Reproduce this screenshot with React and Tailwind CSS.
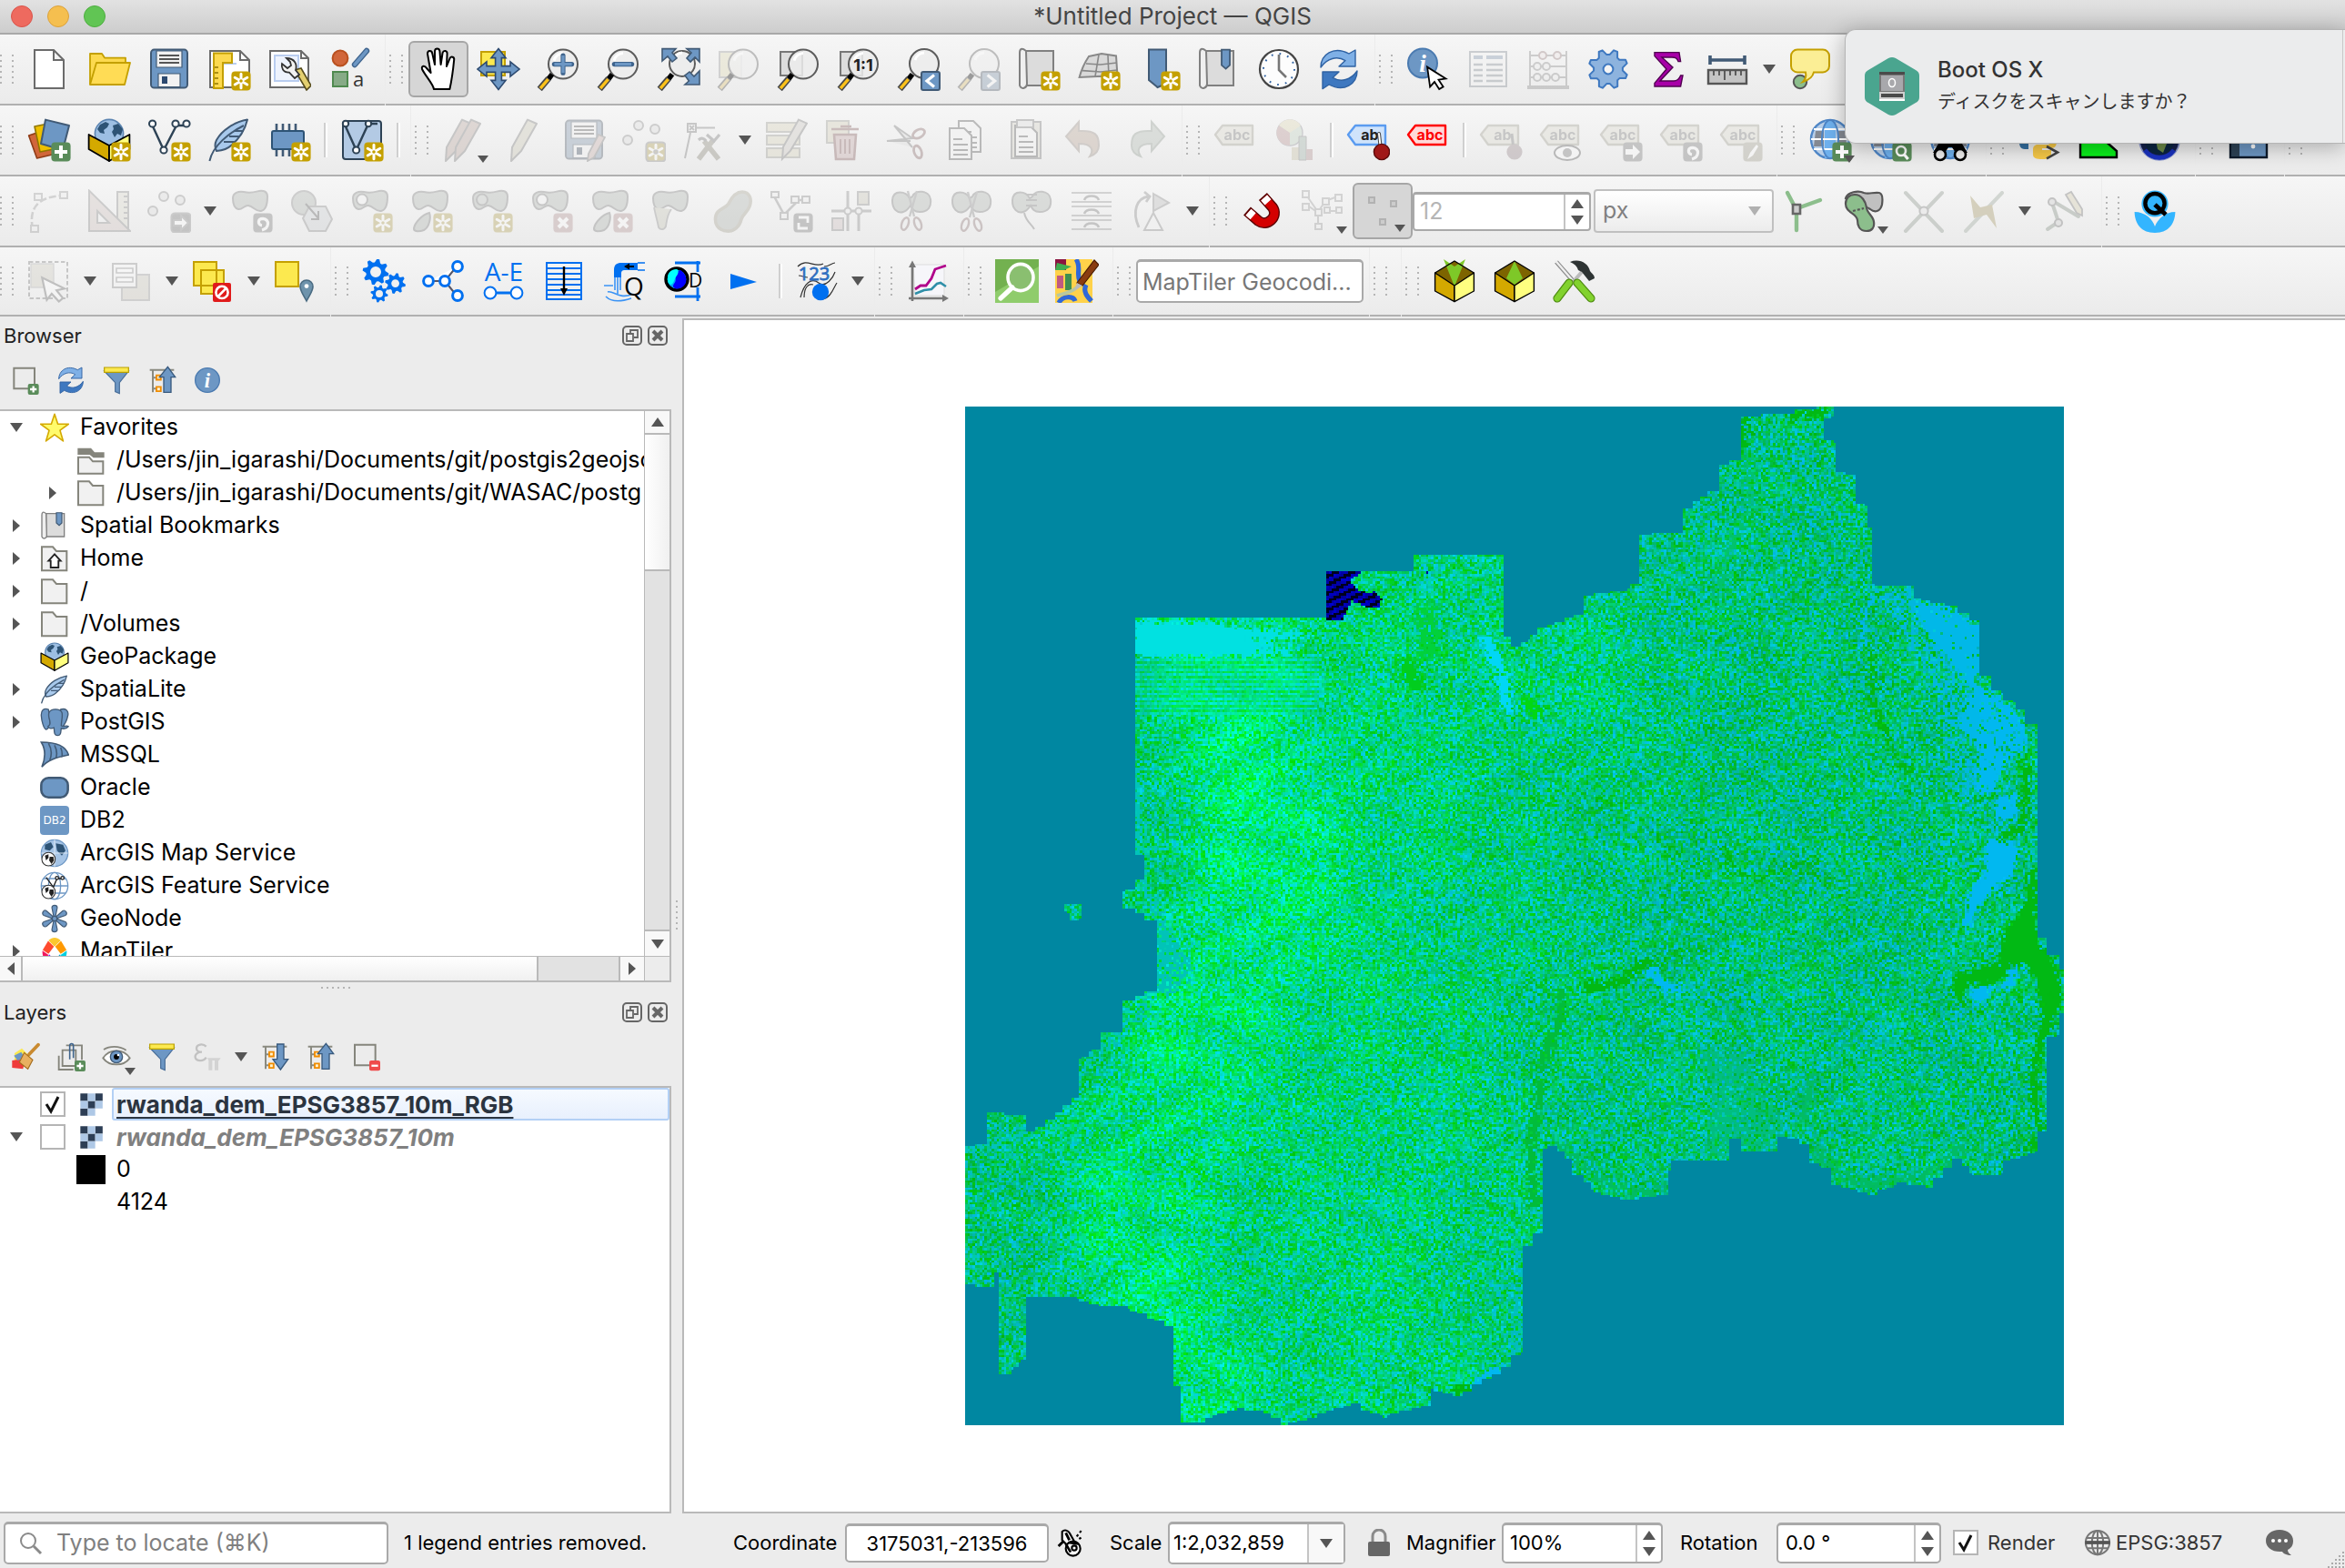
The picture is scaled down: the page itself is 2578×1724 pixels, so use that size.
import { useEffect, useRef, useState } from 'react';

const BLUE = '#6d97c4';
const NAVY = '#415a75';

/* ---------- shared icon parts (24 unit grid) ---------- */

function Svg({ size = 48, children }) {
    return (
        <svg width={size} height={size} viewBox="0 0 24 24" fill="none" className="shrink-0" aria-hidden="true">
            {children}
        </svg>
    );
}

function Badge({ color = '#c4a000', children }) {
    return (
        <g>
            <rect x="13.2" y="13.2" width="10.6" height="10.6" rx="2" fill={color} />
            {children}
        </g>
    );
}

const Star = () => (
    <Badge>
        <path d="M18.5 14.6v7.8M15.1 16.6l6.8 3.9M21.9 16.6l-6.8 3.9" stroke="#fff" strokeWidth="1.5" strokeLinecap="round" />
        <circle cx="18.5" cy="18.5" r="0.9" fill="#c4a000" />
    </Badge>
);
const Plus = () => (
    <Badge color="#5a8c5a"><path d="M18.5 15v7M15 18.5h7" stroke="#fff" strokeWidth="2" /></Badge>
);
const Cross = () => (
    <Badge color="#c98a8a"><path d="M16 16l5 5M21 16l-5 5" stroke="#fff" strokeWidth="2" /></Badge>
);
const ArrowBadge = () => (
    <Badge color="#777"><path d="M14.5 17h4v-2.5l4 4-4 4V20h-4z" fill="#fff" /></Badge>
);
const TurnBadge = () => (
    <Badge color="#777"><path d="M18 22.5c4-1 4.500-6 .5-6.300-3 0-3 3.500-.5 3.800" stroke="#fff" strokeWidth="1.600" /></Badge>
);

function Lens({ x = 14.5, y = 9.3, r = 8, children }) {
    return (
        <g>
            <circle cx={x} cy={y} r={r} fill="#ececec" fillOpacity="0.85" stroke="#5c5c5c" strokeWidth="1" />
            <path d={`M${x - 5} ${y - 2}a5.500 5.500 0 0 1 5-4`} stroke="#fff" strokeWidth="1.500" />
            <path d="M8.500 14.800l-2 2.600" stroke="#000" strokeWidth="2.800" />
            <path d="M6.500 17.200L1.600 23" stroke="#4a4a4a" strokeWidth="3.400" />
            <path d="M6.300 17.600L2 22.600" stroke="#fcc21b" strokeWidth="1.700" />
            {children}
        </g>
    );
}

const Blob = ({ hole }) => (
    <g stroke="#777" strokeWidth="1">
        <path d="M2 5c0-3 3-4 6-3.500 3 .6 4 .6 7-.2 4-1 6 0 6 2.700 0 4-1 7.500-3.500 8-3 .5-4-2.500-7-3-2-.3-3.500 2.500-5.500 2C3 10.500 2 8 2 5z" fill={hole === 'ring' ? '#aaa' : '#a9b5a9'} />
        {hole && <circle cx="7" cy="5.800" r="3" fill={hole === 'full' ? '#b8c2b8' : '#f2f2f2'} />}
    </g>
);
const Leaf = () => <path d="M11 13c-4 1-8 5.500-8.500 8.500-.2 2 3 2 5.500 1 3-1.500 4-7 3-9.500z" fill="#a9b5a9" stroke="#777" />;

const Tag = ({ fill = '#dcd9c0', stroke = '#a09c80', color = '#777', text = 'abc' }) => (
    <g>
        <path d="M1 9l4-5h16.500v10.500H5z" fill={fill} stroke={stroke} strokeWidth="1.200" strokeLinejoin="round" />
        <text x="13" y="11.800" fontSize="8" fontWeight="700" textAnchor="middle" fill={color} fontFamily="Inter, sans-serif">{text}</text>
    </g>
);

const Cube = ({ children }) => (
    <g strokeLinejoin="round">
        <path d="M1.300 7.500L12 1l10.700 6.500L12 15z" fill="#7d6400" />
        {children}
        <path d="M1.300 7.500L12 14.500v8.800L1.300 17.500z" fill="#d4a900" stroke="#000" strokeWidth="0.700" />
        <path d="M22.700 7.500L12 14.500v8.800l10.700-5.800z" fill="#ffff80" stroke="#000" strokeWidth="0.700" />
        <path d="M1.300 7.500L12 1l10.700 6.500" stroke="#000" strokeWidth="0.700" />
    </g>
);

const Continents = () => (
    <path d="M7 3.500l3-1.500 2 1-1 2-2 1.500.5 2L7 8 5.500 6zM14 4l3-1 2.500 3-1 3.500-2-1-1.500 2-1.500-3 1-1.500z" fill="#2d5375" />
);

const Box = () => (
    <g strokeLinejoin="round">
        <circle cx="12" cy="8.500" r="7.800" fill="#9dbfe3" stroke="#5b84b1" strokeWidth="0.800" />
        <Continents />
        <path d="M.8 9L12 15v8.500L.8 17z" fill="#d4a900" stroke="#000" strokeWidth="0.900" />
        <path d="M23.200 9L12 15v8.500L23.200 17z" fill="#ffff80" stroke="#000" strokeWidth="0.900" />
    </g>
);

const Feather = () => (
    <g>
        <path d="M22 .8C15 2 8 6.500 5 12c-1 2-1 4 0 6 3-.3 6-1 8-3 5-4 7.500-8 9-14.200z" fill="#a8c9ec" stroke={NAVY} strokeWidth="1" strokeLinejoin="round" />
        <path d="M20 4C12 8 3 15 1.200 23.500M9 13h6M12 10h6M15 7h5" stroke={NAVY} strokeWidth="1" />
    </g>
);

const Refresh = () => (
    <g stroke="#2f62a3" strokeWidth="0.700" strokeLinejoin="round">
        <path d="M2 11C2 4 9-1 17.500 3.500L21 1.500v9h-9l3.500-3.200C11 4.500 5.500 6 2 11z" fill="#7fb0e6" />
        <path d="M22 13c0 7-7 12-15.500 7.500L3 22.800v-9.300h9l-3.500 3.200c4.500 2.800 10 1.300 13.500-3.700z" fill="#3e78c0" />
    </g>
);

const Info = ({ x = 12, y = 12, r = 10 }) => (
    <g>
        <circle cx={x} cy={y} r={r} fill={BLUE} stroke="#4a7ab0" strokeWidth="1" />
        <text x={x} y={y + r * 0.6} textAnchor="middle" fontSize={r * 1.7} fontStyle="italic" fontWeight="700" fill="#fff" fontFamily="Liberation Serif, serif">i</text>
    </g>
);

const Scroll = () => (
    <g stroke="#808080" strokeWidth="1">
        <path d="M5 2h15v19H5z" fill="#dcdcdc" />
        <path d="M5 2C2.500 0 1.500 1 1.500 3v18c1 2.500 4 1.500 4-1z" fill="#efefef" />
    </g>
);

const Globe = () => (
    <g>
        <circle cx="12" cy="11.500" r="10.500" fill="#b9cfe8" stroke="#4f86c6" strokeWidth="1.200" />
        <path d="M9 1.500h6V22H9z" fill="#6fb1ee" />
        <path d="M4 7h4.500v8.500H3zM16 7h4.500l.5 8.500h-5z" fill="#77777c" fillOpacity="0.8" />
        <path d="M1.500 11.500h21M3 6h18M3 17h18" stroke="#fff" strokeWidth="1" />
        <ellipse cx="12" cy="11.500" rx="4.500" ry="10.500" stroke="#4f86c6" strokeWidth="1" />
    </g>
);

const gearPath = (cx, cy, r, teeth) => {
    let d = '';
    const n = teeth * 4;
    for (let i = 0; i < n; i++) {
        const rr = i % 4 < 2 ? r : r * 0.74;
        const a = ((i + 0.5) / n) * Math.PI * 2;
        d += `${i ? 'L' : 'M'}${(cx + rr * Math.cos(a)).toFixed(2)} ${(cy + rr * Math.sin(a)).toFixed(2)}`;
    }
    return d + 'z';
};

const Filter = () => (
    <g>
        <path d="M2 4.500h20l-7.500 9.500v9l-3.500-1.500V14z" fill={BLUE} stroke="#4a6f99" strokeWidth="0.900" />
        <path d="M2 1.500h20v4H2z" fill="#fce94f" stroke="#b9a000" strokeWidth="0.900" />
    </g>
);

const TreeArrow = ({ down }) => (
    <g>
        <path d="M2 3.500h20M4.500 4v18M4.500 10h4M4.500 19h4" stroke="#8a8a80" strokeWidth="1.500" />
        <path d="M7.500 8h3.600v3.600H7.500zM7.500 17.500h3.600v3.600H7.500z" fill="#fff3d0" stroke="#f08c00" strokeWidth="1.400" />
        {down
            ? <path d="M14 1.500h5.500V14H23l-6.200 8.500L10.500 14H14z" fill={BLUE} stroke="#38597d" strokeWidth="1" />
            : <path d="M13.500 22V9.500H10L16.800 1l6.200 8.500h-3.500V22z" fill={BLUE} stroke="#38597d" strokeWidth="1" />}
    </g>
);

const Scissors = ({ y = 0 }) => (
    <g transform={`translate(0 ${y})`} stroke="#888" strokeWidth="1.200">
        <path d="M10 1l3.500 14M15 1l-4 14" />
        <ellipse cx="8.500" cy="19" rx="1.800" ry="3.500" transform="rotate(20 8.500 19)" stroke="#a07070" />
        <ellipse cx="15.500" cy="19" rx="1.800" ry="3.500" transform="rotate(-20 15.500 19)" stroke="#a07070" />
    </g>
);

const Lobes = () => (
    <path d="M11 5C9 1 2 0 1.500 6c-.2 5 3 7.500 6 6.500 2-.5 3-2 4-3.500 1 2 2 3.500 5 3.500 5 0 6.500-3 6-7C22 .5 14 0 12.500 4z" fill="#a9b5a9" stroke="#777" />
);

const PagePart = ({ x, y }) => (
    <g>
        <path d={`M${x} ${y}h8l4 4v13H${x}z`} fill="#f4f4f4" stroke="#555" strokeWidth="1" />
        <path d={`M${x + 2} ${y + 6}h5M${x + 2} ${y + 9}h8M${x + 2} ${y + 12}h8M${x + 2} ${y + 14.500}h8`} stroke="#555" strokeWidth="0.900" />
    </g>
);

const Pencil = ({ dx = 0, fill = '#cfc7a0' }) => (
    <path transform={`translate(${dx} 0)`} d="M14 .8l5 2.200-8.500 15L5 23.500l.5-7.500z" fill={fill} stroke="#777" strokeWidth="1" strokeLinejoin="round" />
);

const Floppy = () => (
    <g>
        <rect x="2" y="1.300" width="20" height="21" rx="1.800" fill={BLUE} stroke={NAVY} strokeWidth="1" />
        <path d="M5 2h14v9H5z" fill="#f2f2f2" stroke={NAVY} strokeWidth="0.600" />
        <path d="M6.500 4.500h11M6.500 6.500h11M6.500 8.500h11" stroke="#555" strokeWidth="0.900" />
        <path d="M6 14.500h12v7.300H6z" fill="#f2f2f2" stroke={NAVY} strokeWidth="0.600" />
        <path d="M8 16h3v4H8z" fill="#2d4a70" />
    </g>
);

const Folder = () => (
    <path d="M1.500 22V2.500h9l3 3.500h8.500v16z" fill="#f1f1f1" stroke="#85857c" strokeWidth="1.500" />
);

/* ---------- icons ---------- */

const ICONS = {
    newProject: <path d="M4 1.500h10.500L20 7v15.500H4zM14.500 1.500V7H20" fill="#fff" stroke="#6b6b6b" strokeWidth="1" />,
    open: (
        <g stroke="#c4a000" strokeWidth="0.900" strokeLinejoin="round">
            <path d="M1.500 20V3.500H8l1.500 2.300H21V12z" fill="#fcd94f" />
            <path d="M5 8.500h18.500L20.500 20.500H1.500z" fill="#ffdc55" />
        </g>
    ),
    save: <Floppy />,
    layout: (
        <g>
            <path d="M1.500 2h16.500l5 5v15H1.500z" fill="#fff" stroke="#6b6b6b" />
            <path d="M18 2v5h5" stroke="#6b6b6b" />
            <path d="M6 20V9h10" stroke="#b9cdf0" />
            <path d="M3.500 3.300h10v5.200h-5V22.500h-5z" fill="#fcd94f" stroke="#c4a000" />
            <path d="M4 11h2M4 14h2M4 17h2M4 20h2" stroke="#8f7500" strokeWidth="0.700" />
            <Star />
        </g>
    ),
    layoutManager: (
        <g>
            <path d="M1.500 2h17l4 4v16h-21z" fill="#fff" stroke="#6b6b6b" />
            <path d="M18.500 2v4h4" stroke="#6b6b6b" />
            <path d="M4 4.500h13v14H4z" fill="#eef3fd" stroke="#b9cdf0" />
            <path d="M15 12.500l3.500-1L24 21l-2.500 2.500z" fill="#e3cf70" stroke="#554b1c" strokeWidth="0.800" />
            <path d="M10.500 6c4.500 0 6 3.500 5 6.500l2 2.500-2.500 2-3-3.200C8.500 14 7.500 11 8 9l3 2.500 2-1.500-.5-2z" fill="#f2f2f2" stroke="#333" strokeWidth="0.900" />
        </g>
    ),
    style: (
        <g>
            <circle cx="7" cy="6" r="4.200" fill="#d1663a" stroke="#b9501f" />
            <path d="M15 9.500l6.500-7.500" stroke="#3e638c" strokeWidth="3.200" strokeLinecap="round" />
            <path d="M15 9.500l6.500-7.500" stroke={BLUE} strokeWidth="1.800" strokeLinecap="round" />
            <rect x="3" y="13.500" width="8" height="8" fill="#87ab87" stroke="#4f8a4f" />
            <text x="14" y="21.500" fontSize="11" fill="#333" fontFamily="Open Sans, sans-serif">a</text>
        </g>
    ),
    pan: (
        <path d="M8.500 22.500c-.5-3-4.500-7-6.500-11-.5-2 1.500-2.200 2.500-.5l2.300 2.500L5 3c0-1.800 2.200-2 2.600-.3L9 9V1.500c.2-1.700 2.400-1.700 2.700 0l.6 7.500 1-6.500c.5-1.500 2.500-1.200 2.500.4L15.500 10l1.800-4.500c.8-1.300 2.500-.6 2.300.8-.5 5.200-1.400 11.700-2.400 16.200z" fill="#fff" stroke="#000" strokeWidth="1" strokeLinejoin="round" transform="translate(1 .5)" />
    ),
    panSelection: (
        <g>
            <path d="M2.500 2.500h13v13h-13z" fill="#fce94f" stroke="#c4a000" />
            <path d="M12 .8l4 5h-2.300v4.500h4.800V8l5 4-5 4v-2.300h-4.800v4.500H16l-4 5-4-5h2.300v-4.500H5.500V16l-5-4 5-4v2.300h4.800V5.800H8z" fill={BLUE} stroke="#2d4a70" strokeWidth="0.800" />
        </g>
    ),
    zoomIn: <Lens><path d="M14.500 4.500v9.600M9.700 9.300h9.600" stroke="#3e638c" strokeWidth="2.600" strokeLinecap="round" /><path d="M14.500 4.500v9.600M9.700 9.300h9.600" stroke={BLUE} strokeWidth="1.600" /></Lens>,
    zoomOut: <Lens><path d="M9.700 9.300h9.600" stroke="#3e638c" strokeWidth="2.600" strokeLinecap="round" /><path d="M10 9.300h9" stroke={BLUE} strokeWidth="1.600" /></Lens>,
    zoomFull: (
        <g>
            <Lens x={14} y={9} r={7} />
            <path d="M3 .8h7.500L8.500 3l2.500 3-2.500 2-2.500-3L3 7.500zM23.500.8V8L21 5.500 18.500 8l-2-2L19 3 16.500.8zM23.500 20.500h-8l2.200-2-2.200-3 2.500-2 2.500 2.500 3-3z" fill={BLUE} stroke={NAVY} strokeWidth="0.800" />
        </g>
    ),
    zoomSelection: <g><path d="M1.500 2.500h12v14h-12z" fill="#e6dc90" stroke="#999" /><Lens /></g>,
    zoomLayer: <g><path d="M2 2.500h12v13H2z" fill="#ddd" stroke="#777" /><Lens /></g>,
    zoomNative: <g><path d="M2 2.500h12v13H2z" fill="#ddd" stroke="#777" /><Lens><text x="14.500" y="12.800" fontSize="9" fontWeight="700" textAnchor="middle" fill="#222" fontFamily="Inter, sans-serif">1:1</text></Lens></g>,
    zoomLast: <g><Lens x={15} y={9} /><rect x="13.500" y="13.500" width="10" height="10" rx="1" fill={BLUE} stroke={NAVY} /><path d="M20.500 15.300l-4 3.200 4 3.200" stroke="#fff" strokeWidth="1.600" /></g>,
    zoomNext: <g><Lens x={15} y={9} /><rect x="13.500" y="13.500" width="10" height="10" rx="1" fill={BLUE} stroke={NAVY} /><path d="M16.800 15.300l4 3.200-4 3.200" stroke="#fff" strokeWidth="1.600" /></g>,
    newMap: <g><Scroll /><Star /></g>,
    new3d: (
        <g>
            <path d="M6.500 5l7-1.500 8 1.200.8 12-8.500-.8-12.500.6C2.500 12 4.500 8 6.500 5z" fill="#d9d9d9" stroke="#888" />
            <path d="M5 9l8 .5 9-1M3 12.800l10 .7 9-1M12 4l-2 12M17 4.500l.5 12" stroke="#888" strokeWidth="0.800" />
            <Star />
        </g>
    ),
    newBookmark: <g><path d="M6.500 1.300H16V20l-4.700 2-4.800-4z" fill={BLUE} stroke={NAVY} /><Star /></g>,
    bookmarks: <g><Scroll /><path d="M13.500 1.300h4.500v8.500l-2.200 2-2.300-2z" fill={BLUE} stroke={NAVY} strokeWidth="0.900" /></g>,
    clock: (
        <g>
            <circle cx="12" cy="12" r="10.500" fill="#fdfdfd" stroke="#444" strokeWidth="1.100" />
            <circle cx="12" cy="12" r="8.500" stroke="#3465a4" strokeWidth="1" strokeDasharray="0.900 3.550" />
            <path d="M12 4v8.500l4 4" stroke="#777" strokeWidth="1.300" />
        </g>
    ),
    refresh: <Refresh />,
    identify: (
        <g>
            <Info x={9} y={8.700} r={8} />
            <path d="M12 10.500v11l2.800-2.300 2 4.300 2.400-1-2-4.200h4z" transform="rotate(-8 14 14)" fill="#fff" stroke="#000" strokeWidth="0.900" />
        </g>
    ),
    table: (
        <g>
            <path d="M2 2.500h20v19H2z" fill="#f4f4f4" stroke="#7a8a9a" />
            <path d="M4 5.500h5M11 5.500h9" stroke="#6d97c4" strokeWidth="2" />
            <path d="M4 9.500h5M11 9.500h9M4 12.500h5M11 12.500h9M4 15.500h5M11 15.500h9M4 18.500h5M11 18.500h9" stroke="#7a8a9a" strokeWidth="1.200" />
        </g>
    ),
    abacus: (
        <g stroke="#888">
            <path d="M2 2v20M22 2v20M2 4.500h20M2 10.500h20M2 16.500h20" />
            <path d="M.5 22h23" strokeWidth="2" />
            <g fill="#f4e4e4" stroke="#a77">
                <circle cx="9" cy="4.500" r="2" /><circle cx="17" cy="4.500" r="2" />
            </g>
            <g fill="#eee">
                <circle cx="6" cy="10.500" r="2" /><circle cx="11" cy="10.500" r="2" />
                <circle cx="6" cy="16.500" r="2" /><circle cx="11" cy="16.500" r="2" /><circle cx="16" cy="16.500" r="2" />
            </g>
        </g>
    ),
    gear: (
        <g>
            <path d={gearPath(12, 12, 10.800, 8)} fill="#8db3de" stroke="#3e78c0" strokeWidth="1" strokeLinejoin="round" transform="rotate(11 12 12)" />
            <circle cx="12" cy="12" r="2.700" fill="#f4f4f4" stroke="#3e78c0" />
        </g>
    ),
    sigma: <path d="M4.500 2.800H18l.8 5h-1.300c-.7-2-1.500-2.300-3.500-2.300H8.500L14.500 11l-7 7.500h7.500c2 0 3-1 3.800-3H20l-1.200 6H4.500v-1.800L11 12 4.500 4.800z" fill="#a800a8" stroke="#500050" strokeWidth="0.700" />,
    measure: (
        <g>
            <path d="M2 7h19M2 4.500v5M21 4.500v5" stroke={NAVY} strokeWidth="1.800" />
            <rect x="1" y="12.500" width="21" height="7.500" fill="#c4c4c4" stroke="#555" strokeWidth="1.200" />
            <path d="M4 13v2.500M7 13v2.500M10 13v5M13 13v2.500M16 13v2.500M19 13v2.500" stroke="#444" strokeWidth="0.800" />
        </g>
    ),
    mapTip: (
        <g>
            <circle cx="6.500" cy="19" r="3.600" fill="#8cbe8c" stroke="#555" />
            <path d="M5 1.300h14a3.500 3.500 0 0 1 3.500 3.500v5.400a3.500 3.500 0 0 1-3.500 3.500h-5c-.5 2.300-2.500 4.300-6 5.300 1.500-1.500 2-3 1.500-5.300H5a3.500 3.500 0 0 1-3.500-3.500V4.800A3.500 3.500 0 0 1 5 1.300z" fill="#fbee95" stroke="#c4a000" />
        </g>
    ),
    dataSource: (
        <g strokeLinejoin="round">
            <path d="M.8 9.500l9-3 6 13-10.500 2.500z" fill="#d1663a" stroke="#8f3c17" strokeWidth="0.800" />
            <path d="M4 4.500l10-2 3 14-10 2z" fill="#eec000" stroke="#8f7500" strokeWidth="0.800" />
            <path d="M10 .8l13 3.200-3.500 13.500L7.500 14z" fill={BLUE} stroke={NAVY} strokeWidth="1" />
            <Plus />
        </g>
    ),
    newGpkg: <g><Box /><Star /></g>,
    newShp: (
        <g>
            <path d="M3 4.500l6 13 7-13.500h4" stroke="#2d4255" strokeWidth="1.200" />
            <g fill="#fff" stroke="#2d4255"><circle cx="2.800" cy="3" r="1.800" /><circle cx="9" cy="17.500" r="1.800" /><circle cx="15.500" cy="3" r="1.800" /><circle cx="21.500" cy="3" r="1.800" /></g>
            <Star />
        </g>
    ),
    newSpatialite: <g><Feather /><Star /></g>,
    newMemory: (
        <g>
            <path d="M5 3v18M8.500 3v18M12 3v18M15.500 3v18" stroke={NAVY} strokeWidth="1.300" />
            <rect x="2.500" y="7" width="17.500" height="10" rx="1" fill={BLUE} stroke="#2d5375" />
            <Star />
        </g>
    ),
    newVirtual: (
        <g>
            <rect x="1.500" y="1.500" width="21" height="21" rx="1.500" fill="#b3cae4" stroke="#2d4255" />
            <path d="M2.500 3.500l6.300 14L15.500 3h5" stroke="#2d4255" strokeWidth="1.200" />
            <g fill="#fff" stroke="#2d4255"><circle cx="3" cy="3" r="1.600" /><circle cx="8.800" cy="17.500" r="1.800" /><circle cx="15.500" cy="3" r="1.600" /></g>
            <Star />
        </g>
    ),
    currentEdits: <g><Pencil dx={-3} fill="#c9a090" /><Pencil dx={2} fill="#c9a090" /></g>,
    edit: <Pencil />,
    saveEdits: <g><Floppy /><path d="M20 9l3.500 1.500-6 11L14 23.500l.5-4z" fill="#d9a9a0" stroke="#777" strokeWidth="0.900" /></g>,
    addPoint: <g fill="#ddd" stroke="#888"><circle cx="9" cy="4" r="2.500" /><circle cx="18" cy="6" r="2.500" /><circle cx="3" cy="12" r="2.500" /><Star /></g>,
    vertexTool: (
        <g stroke="#777">
            <path d="M3 3h4.500v4.500H3zM4 4l2.500 2.500M6.500 4L4 6.500M8 5.200h10M4.500 8L1.500 22" />
            <path d="M9 22.500L17 12M20 22.500l-8-10" strokeWidth="2.800" stroke="#8a8468" />
            <path d="M9 12c1.500-1.500 3-1 4 .5M13.500 9l4 3.500 3-3.500" strokeWidth="1.600" />
        </g>
    ),
    modifyAttr: (
        <g>
            <path d="M1.500 2.500h18v5h-18zM1.500 9.500h18v5h-18zM1.500 16.500h18v5h-18z" fill="#ddd3a0" stroke="#998" />
            <path d="M19 .8l4.500 2-9 15-4.500 4.500.5-6.500z" fill="#cfc7b8" stroke="#777" />
        </g>
    ),
    trash: (
        <g>
            <path d="M1.500 1.500h12v12h-12z" fill="#d9cfa0" stroke="#998" />
            <path d="M4 6h15M9 4.500h6M5.500 9h12l-1 13.500h-10z" fill="#d8a0a0" stroke="#a05050" strokeWidth="1.300" />
            <path d="M9 11.500v8M11.500 11.500v8M14 11.500v8" stroke="#a05050" />
        </g>
    ),
    cut: (
        <g stroke="#777">
            <path d="M1.500 12.500l14-1.500-10-7 10 12M1.500 12.500h13" fill="#ddd" />
            <ellipse cx="19" cy="8.500" rx="3.500" ry="2.200" transform="rotate(-30 19 8.500)" stroke="#a06060" strokeWidth="1.400" />
            <ellipse cx="18.500" cy="18.500" rx="2" ry="3.500" transform="rotate(-20 18.500 18.500)" stroke="#a06060" strokeWidth="1.400" />
        </g>
    ),
    copy: <g><PagePart x={8} y={1.500} /><PagePart x={3} y={5.500} /></g>,
    paste: <g><rect x="4" y="2" width="16" height="20" fill="#d6cfb8" stroke="#777" /><PagePart x={6} y={4} /><path d="M7 1h9v4H7z" fill="#ddd" stroke="#777" /></g>,
    undo: <path d="M1 10l7-8v5c9-.5 11 2 11 8 0 3-2 5-5 6 2-3 2-7-6-7v4z" fill="#c9a080" stroke="#a08a7a" />,
    redo: <path d="M22 10l-7-8v5C6 6.500 4 9 4 15c0 3 2 5 5 6-2-3-2-7 6-7v4z" fill="#a9bca9" stroke="#8a9c8a" />,
    label: <Tag />,
    diagram: (
        <g>
            <circle cx="9" cy="8" r="7" fill="#b3d6b3" stroke="#889" strokeWidth="0.700" />
            <path d="M9 8L3 4a7 7 0 0 1 12 0z" fill="#e6d890" />
            <path d="M9 8L3 4a7 7 0 0 0 6 11z" fill="#d68a8a" />
            <path d="M10 16h4v7h-4z" fill="#cfc28a" /><path d="M14 10h4v13h-4z" fill="#8fb5a0" stroke="#777" strokeWidth="0.500" /><path d="M18 17h3.500v6H18z" fill="#c98a8a" />
        </g>
    ),
    pinLabel: (
        <g>
            <Tag fill="#cfe3fb" stroke="#5a9bf0" color="#222" text="ab" />
            <path d="M18 8.500l.8 7" stroke="#444" strokeWidth="2" strokeLinecap="round" />
            <path d="M18 8.500l.8 7" stroke="#fff" strokeWidth="1" strokeLinecap="round" />
            <circle cx="19.500" cy="18.500" r="4.300" fill="#a01818" stroke="#5c0a0a" strokeWidth="0.700" />
        </g>
    ),
    unplaced: <Tag fill="#ffd9d9" stroke="#f00" color="#f00" />,
    pinGrey: <g><Tag text="ab" /><path d="M18 8.500l.8 7" stroke="#777" strokeWidth="1.500" /><circle cx="19.500" cy="18.500" r="4.300" fill="#a08088" /></g>,
    showLabel: <g><Tag /><ellipse cx="15.500" cy="19" rx="7" ry="4" fill="#fff" stroke="#555" /><circle cx="15.500" cy="19" r="2.500" fill="#777" /></g>,
    moveLabel: <g><Tag /><ArrowBadge /></g>,
    rotateLabel: <g><Tag /><TurnBadge /></g>,
    editLabel: <g><Tag /><Badge color="#a39c7c"><path d="M20.500 14.500L17 19l-1.500 3.500 3-2 3-5z" fill="#fff" /></Badge></g>,
    addGlobe: <g><Globe /><Plus /></g>,
    searchGlobe: <g><Globe /><Badge color="#5a8c5a"><circle cx="18" cy="18" r="2.500" stroke="#fff" strokeWidth="1.300" /><path d="M19.800 20l2 2.500" stroke="#fff" strokeWidth="1.600" /></Badge></g>,
    binoculars: (
        <g>
            <Globe />
            <path d="M8.500 9h7l6 10h-6.500l-2-3h-2l-2 3H2.500z" fill="#000" />
            <circle cx="6.500" cy="20" r="3" fill="#eee" stroke="#000" strokeWidth="1.300" /><circle cx="17.500" cy="20" r="3" fill="#eee" stroke="#000" strokeWidth="1.300" />
        </g>
    ),
    python: (
        <g>
            <path d="M10.500 1c-5 0-5 2-5 4v2.500h5.500v1H4C1.500 8.500 1 11 1 13s.5 4 3 4h2v-3c0-2 1.500-3 3.500-3h5c1.500 0 2.500-1 2.500-2.500V5c0-3-3-4-6.500-4z" fill="#3571a3" />
            <path d="M19 8v3.500c0 2-1.500 3-3 3h-5c-1.500 0-2.500 1.200-2.500 2.700V20c0 2 2 2.500 5 2.500 3.500 0 5-1 5-3v-2h-5v-1h5c2.500 0 3-2 3-4s-.5-4-2.500-4.500z" fill="#f7c948" />
            <path d="M16 15.500l6 3.300-6 3.400" stroke="#444" strokeWidth="1.300" />
        </g>
    ),
    contour: <path d="M1.500 3h6l3 4 4 5 3 2.500 4 3.500v3.500h-20z" fill="#0bf01b" stroke="#000" strokeWidth="1.200" />,
    earth: (
        <g>
            <circle cx="12" cy="12" r="11" fill="#14204a" stroke="#8e9ad0" strokeWidth="0.800" />
            <circle cx="12" cy="12" r="8" fill="#0b2540" />
            <path d="M10 12l4-2 2 4-2 5-3-2zM6 10l3-2 1 4-2 2z" fill="#6c8a48" />
            <path d="M4 17.500c4 5.500 12 5.500 16 0" stroke="#1a32c0" strokeWidth="2.400" />
        </g>
    ),
    book: (
        <g>
            <path d="M2 2h20v19.500H2z" fill={BLUE} stroke="#0d1a2a" strokeWidth="1.200" />
            <path d="M2.500 2.500h4.500v18.500H2.500z" fill="#2d4255" />
            <circle cx="14.500" cy="15.500" r="1.200" fill="#fff" />
        </g>
    ),
    digitCurve: <g stroke="#999"><path d="M3 22C1 12 4 4 20 3.500" strokeWidth="1.300" strokeDasharray="4 1.500" /><path d="M2 20h4v3.500H2zM4 2.500h4v3.500H4zM18 1.500h4V5h-4z" fill="#eee" /></g>,
    triangle: (
        <g stroke="#888">
            <path d="M16.500 1.500h6v21h-6z" fill="#ddd8c0" /><path d="M20 4h2M20 7h2M20 10h2M20 13h2M20 16h2" />
            <path d="M1 .8V23h22.500zM5.500 12v6.500H12z" fillRule="evenodd" fill="#d9c0b8" />
        </g>
    ),
    movePoint: <g fill="#ddd" stroke="#888"><circle cx="9" cy="4" r="2.500" /><circle cx="18" cy="6" r="2.500" /><circle cx="3" cy="12" r="2.500" /><ArrowBadge /></g>,
    rotateFeature: <g><Blob /><TurnBadge /></g>,
    simplify: <g stroke="#888"><ellipse cx="8" cy="7.500" rx="6.500" ry="6.500" fill="#a9b5a9" /><path d="M11 9.500h9l3.500 7-3.500 6.500h-9L7.500 16z" fill="#c9ced4" /><path d="M9 8l7 8M16 12v4.500h-4" stroke="#555" /></g>,
    addRing: <g><Blob hole="empty" /><Star /></g>,
    addPart: <g><Blob /><Leaf /><Star /></g>,
    fillRing: <g><Blob hole="full" /><Star /></g>,
    deleteRing: <g><Blob hole="empty" /><Cross /></g>,
    deletePart: <g><Blob /><Leaf /><Cross /></g>,
    reshape: (
        <g>
            <Blob />
            <path d="M2.500 10c1 5 2 8 2.500 11 1 1.500 3 1.500 4-.5.500-3 .5-6 3-9.500" fill="#c5c5a8" stroke="#888" strokeWidth="0.900" />
        </g>
    ),
    offset: <path d="M18 1.500c4 0 5.500 4 4 8-1 3-3.500 4-4.500 7-1 4-4 7-8 6.500-5-.5-7-4-6-8.500 1-4 5-3.500 7-6.500 1-2 3-6.500 7.500-6.500z" fill="#a9b5a9" stroke="#a89f80" strokeWidth="1.800" />,
    reverse: <g><path d="M2 3l6 11 8-8h4" stroke="#888" strokeWidth="1.300" /><path d="M1 1.500h4v3H1zM12 4h4v3.500h-4zM18 4h4v3.500h-4zM6 13h4v3.500H6z" fill="#eee" stroke="#888" /><Badge color="#777"><path d="M16 15.500h5v3M21 21.500h-5v-3" stroke="#fff" strokeWidth="1.400" /></Badge></g>,
    trimExtend: <g stroke="#888"><path d="M10 1v22M1 12h22M16 12v11" strokeWidth="1.500" /><path d="M15.500 1.500h6v7h-6z" fill="#c9c3a8" /><path d="M1.500 16h6v6.500h-6z" fill="#d8bcbc" /><circle cx="10" cy="12" r="1.800" fill="#eee" /><circle cx="16" cy="12" r="1.800" fill="#eee" /></g>,
    splitFeatures: <g><Lobes /><Scissors /></g>,
    splitParts: <g><Lobes /><Scissors y={0.500} /></g>,
    mergeFeatures: <g stroke="#777"><Lobes /><path d="M9 3h6M9 6h6M9 9h6M8 13c1 5 4 6 5.500 9" /></g>,
    mergeAttr: <g stroke="#777"><path d="M1 2h22M1 7h22M1 9.500h22M1 14.500h22M1 17h22M1 22h22" strokeWidth="0.800" /><path d="M8 6c1-3 7-3 8 0M8 13.500c1-3 7-3 8 0M8 21c1-3 7-3 8 0" strokeWidth="1.300" /></g>,
    rotateSymbols: <g stroke="#888"><path d="M13 2.500l8.500 5L13 12z" fill="#bbb" /><path d="M13 13l5 9.500H8z" fill="#f4f4f4" /><path d="M5 21C1 12 4 5 10 4M8 1.500l3 2.500-2 3" strokeWidth="1.400" /></g>,
    magnet: (
        <g>
            <path d="M12.200 4L17.500 10C21 15 14.500 21 9.800 17.500L3.500 12" stroke="#5a0000" strokeWidth="6" />
            <path d="M12.800 4.700L17.500 10C21 15 14.500 21 9.800 17.500L4.200 12.600" stroke="#d40000" strokeWidth="4.600" />
            <path d="M12.800 4.700l2.200 2.500M4.200 12.600l2.600 2.300" stroke="#fff" strokeWidth="4.600" />
        </g>
    ),
    snapVertex: <g stroke="#999"><path d="M2.500 2.500l7 10 4-6 8-3M2.500 8l7 5v8M14 12h7" /><path d="M1 1h3.500v3.500H1zM1 8h3.500v3.500H1zM8 11h3.500v3.500H8zM8 19h3.500v3H8zM12 5h3.500v3.500H12zM19 3h3.500v3.500H19zM13 10h3v3h-3zM19.500 10h3v3h-3z" fill="#eee" /></g>,
    snapPoints: <g stroke="#b2b2b2"><path d="M4.500 4.500h3v3h-3zM16.500 6.500h3v3h-3zM10.500 16.500h3v3h-3z" fill="#ccc" /></g>,
    topology: <g><path d="M3 2l5 9.500v11M8.500 10.500L21 6" stroke="#8cbe8c" strokeWidth="2.200" strokeLinecap="round" strokeLinejoin="round" /><path d="M6 8.500h4v5H6z" fill="#ccc" stroke="#666" strokeWidth="1.300" /></g>,
    avoidOverlap: (
        <g stroke="#555" strokeWidth="1.100">
            <path d="M2 5C3 1.500 9 .5 12 2c3 1 5-.5 8.500 0 2 .5 2 3 1.500 6.500-1 4-4 4.500-6.500 2.500-2-1.500-2.500-1-4-.5z" fill="#c0c0c0" />
            <path d="M2 8c0-3 2-5 5-5 4 0 6 4 6.500 7 0 3 4 5 4 8 .5 3-1 5-4 5-4 0-5-3-5-6C8 13 2 13 2 8z" fill="#8cbe8c" />
            <path d="M6 12l6-1.500" strokeDasharray="1.500 1" />
        </g>
    ),
    intersect: <g opacity="0.600"><path d="M2 2l20 21M22 2L2 23" stroke="#b4bab4" strokeWidth="2" strokeLinecap="round" /><circle cx="12" cy="12" r="2.300" fill="#e8e8e8" stroke="#aaa" /></g>,
    tracing: <g opacity="0.700"><path d="M22 2L2 23" stroke="#c4cac4" strokeWidth="2" strokeLinecap="round" /><path d="M4.500 3.500l5.500 6.500 6.500-1.500 2.500 13-5.500-7.500-7 2z" fill="#c9c2a8" /></g>,
    snapPencil: <g opacity="0.650"><path d="M4 6l15 9M4 6l4 12-6 4" stroke="#b4bab4" strokeWidth="2" strokeLinecap="round" /><circle cx="4.500" cy="7" r="2" fill="#ddd" stroke="#aaa" /><circle cx="8" cy="18.500" r="2" fill="#ddd" stroke="#aaa" /><path d="M12 3l3-1.500 6 9.500v3.500L18 13z" fill="#e0dccb" stroke="#aaa" strokeWidth="0.900" /></g>,
    qTulip: (
        <g>
            <circle cx="12" cy="8" r="7.300" fill="#33b5ff" />
            <path d="M.8 12.500c6 0 10 4 11.200 8 1.500-4 5.500-8 11.200-8-.2 7-4.200 11.500-11.200 11.500S1 19.500.8 12.500z" fill="#33b5ff" />
            <circle cx="12" cy="7.800" r="5.300" stroke="#000" strokeWidth="2.200" /><path d="M12 8.500l6 5.500" stroke="#000" strokeWidth="2.500" />
        </g>
    ),
    select: (
        <g>
            <rect x="1" y="1.500" width="21" height="20" stroke="#777" strokeDasharray="2.200 1.300" />
            <path d="M2 2.500h12.500v13H2z" fill="#cfc9b0" stroke="#aaa" strokeWidth="0.700" />
            <path d="M9.500 9v12.500l3.300-2.700 3 5 2.500-1.300-2.500-5h4.500z" transform="rotate(-12 14 16)" fill="#fff" stroke="#666" strokeWidth="1.100" />
        </g>
    ),
    selectForm: <g><path d="M4 8h15v14H4z" fill="#cfc9b0" stroke="#999" transform="translate(3 .5)" /><path d="M2 2.500h13v13H2z" fill="#f4f4f4" stroke="#888" /><path d="M4 5h9v2.500H4zM4 10h9v2.500H4z" fill="#fff" stroke="#888" strokeWidth="0.800" /></g>,
    deselect: (
        <g>
            <path d="M1.500 1.500h12.500v13H1.500zM5.500 6h12.500v13H5.500z" fill="#fce94f" stroke="#c4a000" />
            <rect x="12" y="13" width="10" height="10.500" rx="1" fill="#e01b1b" /><circle cx="17" cy="18.200" r="3.300" stroke="#fff" strokeWidth="1.300" /><path d="M14.800 20.500l4.500-4.600" stroke="#fff" strokeWidth="1.300" />
        </g>
    ),
    selectLocation: <g><path d="M1.500 1.500h12.500v13.500H1.500z" fill="#fce94f" stroke="#c4a000" /><path d="M18.500 23c-2-4-3.500-5.500-3.500-8a3.500 3.500 0 0 1 7 0c0 2.500-1.500 4-3.500 8z" fill="#6e93ac" stroke="#4a6b82" strokeWidth="0.800" /><circle cx="18.500" cy="14.800" r="1.200" fill="#fff" /></g>,
    gears: (
        <g fill="#0070f0">
            <path fillRule="evenodd" d={gearPath(7.500, 7, 7.200, 8) + 'M10.500 7a3 3 0 1 0-6 0 3 3 0 1 0 6 0z'} />
            <path fillRule="evenodd" d={gearPath(18.300, 13.300, 5.700, 8) + 'M20.500 13.300a2.200 2.200 0 1 0-4.400 0 2.200 2.200 0 1 0 4.400 0z'} />
            <path fillRule="evenodd" d={gearPath(9.500, 19, 4.800, 8) + 'M11.500 19a2 2 0 1 0-4 0 2 2 0 1 0 4 0z'} />
        </g>
    ),
    network: <g fill="#fff" stroke="#0070f0" strokeWidth="1.500"><path d="M4 12h8.500l6.500-8M12.500 12l6.500 8" stroke="#556" strokeWidth="1" /><circle cx="3.500" cy="12" r="2.700" /><circle cx="12.500" cy="12" r="2.700" /><circle cx="19.500" cy="4" r="2.700" /><circle cx="19.500" cy="20" r="2.700" /></g>,
    aToE: <g><text x="12" y="12" fontSize="14" textAnchor="middle" fill="#0070f0" fontFamily="Open Sans, sans-serif">A-E</text><g fill="#fff" stroke="#0070f0"><path d="M7 18.500h9" strokeWidth="1.500" /><circle cx="4.500" cy="18.500" r="3.200" /><circle cx="19" cy="18.500" r="3.200" /></g></g>,
    rows: <g><path d="M2.500 2h19v20h-19zM2.500 5h19M2.500 8h19M2.500 11h19M2.500 14h19M2.500 17h19M2.500 19.500h19" stroke="#0070f0" strokeWidth="1" /><path d="M12 4v12" stroke="#000" strokeWidth="1.200" /><path d="M12 20l-2-4h4z" fill="#000" /></g>,
    pipe: (
        <g>
            <path d="M6.500 10V6c0-3 1.500-4 4-4h9v4h-7c-1.500 0-2 .5-2 2v2z" fill="#0070f0" />
            <path d="M19.500 2h4M19.500 6h4" stroke="#0070f0" strokeWidth="0.700" />
            <path d="M17.500 4h-5" stroke="#000" /><path d="M12 4l3-1.800v3.600z" fill="#000" />
            <path d="M7 10v7M8.500 10v9M10 10v7M1 14.500h5M3 18c3-1 6 4 13 1.500M2 20.500c3 3 8 3 14 1" stroke="#3a93f5" strokeWidth="0.800" />
            <text x="12" y="20" fontSize="14" fill="#000" fontFamily="Open Sans, sans-serif">Q</text>
        </g>
    ),
    yinYang: (
        <g>
            <path d="M7 2h14M7 20.500h14M19.500 1v22" stroke="#0070f0" strokeWidth="1.400" />
            <circle cx="8" cy="11" r="6" fill="#0af" stroke="#000" strokeWidth="1.700" />
            <path d="M10 6c-5 2-1 5-3.500 7.500C5.500 15 6 16 8 16.200c6-.2 7-7 2-10.200z" fill="#0000ff" /><path d="M3 10c0-3 3-5 5.500-4.300 1 2-.5 3-1.500 5s-1 3-2.500 3.300C3 13 2.800 11.500 3 10z" fill="#0ff" />
            <path d="M15.500 7h7v8.500h-7z" fill="#f0f0f0" /><text x="14.500" y="15.300" fontSize="10.500" fill="#000" fontFamily="Open Sans, sans-serif">D</text>
        </g>
    ),
    play: <path d="M4.500 8L19 12.500 4.500 16.500z" fill="#0070f0" />,
    contourLabel: (
        <g>
            <path d="M1.500 4c5-5 9 1 14-1.500M2 9c2 0 3 1 5 1M3 21c2-8 6-11 10-8s8-3 9-6M5 21c0-5 2-8 5-7M23 13c-2 3-3 8-8 9M16 4c3 0 4-2 6-2" stroke="#333" strokeWidth="0.600" />
            <text x="10.500" y="11.500" fontSize="10" textAnchor="middle" fill="#2f6fc0" stroke="#2f6fc0" strokeWidth="0.400" fontFamily="Open Sans, sans-serif">123</text>
            <circle cx="14" cy="18" r="4.600" fill="#0070f0" />
        </g>
    ),
    profile: (
        <g>
            <path d="M4 3h17v17H5z" fill="#f6f6fa" stroke="#ddd" strokeWidth="0.500" />
            <path d="M3.500 23V3M1.500 21.500h20" stroke="#777" strokeWidth="1.300" /><path d="M3.500.8l2 3.700h-4zM23.500 21.500l-3.500-2v4z" fill="#777" />
            <path d="M5 16.500l3-2h3l3-4 2-5 6-2" stroke="#b0008a" strokeWidth="1.400" /><path d="M5 19l5-2 4-.5 3-3 2-.5 3 2" stroke="#2f8fa8" strokeWidth="1.300" />
        </g>
    ),
    greenSearch: <g><path d="M0 0h24v24H0z" fill="#73b150" /><path d="M0 24V18L24 4v20z" fill="#8fcc6c" /><ellipse cx="14" cy="10" rx="7" ry="7.300" fill="#8abf70" stroke="#fff" strokeWidth="1.800" /><path d="M9.500 15.500L3 21.500" stroke="#fff" strokeWidth="2.600" strokeLinecap="round" /></g>,
    osmEdit: (
        <g>
            <path d="M0 0h20.500v24H0z" fill="#ffd24a" /><path d="M0 0h6v6H0z" fill="#8a1440" /><path d="M1 2l8 2-4 2H0z" fill="#3fae50" />
            <path d="M1 9h3.500v7H1z" fill="#c05a80" /><path d="M5.500 8h3.500v9H5.500z" fill="#3f8f50" />
            <path d="M13 14c-2 4-9 5-12 6" stroke="#b8c8a0" strokeWidth="1.800" /><path d="M11.500 0c3 4 0 8 2 12M2 24c2-4 8-4 9-1M17 14c-2 4 1 7 3 9" stroke="#2f68d8" strokeWidth="2.600" />
            <path d="M21.500.5L24 3l-9 11.500-3-1.500z" fill="#8a3c10" stroke="#4a1c00" strokeWidth="0.600" /><path d="M12 13l3 1.500-4.500 3z" fill="#bbb" />
        </g>
    ),
    importBox: <Cube><path d="M6 0l6 4 6-4-6 15z" fill="#7ec828" /></Cube>,
    exportBox: <Cube><path d="M12 1l4.500 9.500L12 14l-4.500-3.500z" fill="#7ec828" /></Cube>,
    toolbox: (
        <g>
            <path d="M2 1.500L13 14" stroke="#888" strokeWidth="2.400" /><path d="M1.500.8L12.500 13.500" stroke="#eee" strokeWidth="1.200" />
            <path d="M16 7L9 15" stroke="#bbb" strokeWidth="2" />
            <path d="M9.500 1.500c5-2 10 .5 11 5 1 1.500 2.500 2 2.500 4l-3 1.500-4-5-2-1c-.5-2-2-3.500-4.500-4.500z" fill="#2e3434" />
            <path d="M9 13L2.500 21.500" stroke="#4e8a10" strokeWidth="4.600" strokeLinecap="round" /><path d="M9 13L2.500 21.500" stroke="#82d22e" strokeWidth="3.400" strokeLinecap="round" />
            <path d="M13.500 13l7.500 8.500" stroke="#4e8a10" strokeWidth="4.600" strokeLinecap="round" /><path d="M13.500 13l7.500 8.500" stroke="#82d22e" strokeWidth="3.400" strokeLinecap="round" />
        </g>
    ),

    /* dock and tree icons */
    addLayer: <g><path d="M2.500 2h17v17h-17z" stroke="#85857c" strokeWidth="1.500" /><rect x="14" y="15" width="9" height="9" rx="1.500" fill="#5a8c5a" /><path d="M18.500 16.800v5.400M15.800 19.500h5.400" stroke="#fff" strokeWidth="1.700" /></g>,
    filter: <Filter />,
    collapse: <TreeArrow />,
    expand: <TreeArrow down />,
    info: <Info />,
    brush: (
        <g>
            <path d="M3 9L9 5l7 7-6 9-7-1z" fill="#fce94f" /><path d="M1 15l6-1 4 3-1 5-9-1z" fill="#ef3b3b" /><path d="M2.500 11l6-3 3 5-6 2z" fill="#6d97c4" />
            <path d="M22.500 2L15 10" stroke="#c98a30" strokeWidth="2.800" strokeLinecap="round" /><path d="M11 8.500l7 6-4 7.500-7-5.500z" fill="#e8b060" stroke="#a36b1c" strokeWidth="0.800" />
        </g>
    ),
    addGroup: <g stroke="#85857c" strokeWidth="1.400"><path d="M8 2.500h13v12M5 6.500h11v13H5zM2 11v11.500h12" /><path d="M11 14V3c0-2.500 3-2.500 3 0v10" stroke="#3e638c" strokeWidth="1.200" /><rect x="15" y="15" width="9" height="9" rx="1.500" fill="#5a8c5a" stroke="none" /><path d="M19.500 16.800v5.400M16.800 19.500h5.400" stroke="#fff" strokeWidth="1.700" /></g>,
    eye: (
        <g>
            <path d="M1.500 6C6 3 14 2.500 20 6.500" stroke="#85857c" strokeWidth="1.300" />
            <path d="M1 13c5-8 17-8 22 0-5 7-17 7-22 0z" fill="#fff" stroke="#85857c" strokeWidth="1.400" /><circle cx="12" cy="12" r="5" fill={BLUE} stroke={NAVY} /><circle cx="12" cy="12" r="2.200" fill="#000" /><circle cx="13.500" cy="10.500" r="1" fill="#fff" />
        </g>
    ),
    epsilon: <g><path d="M11 3.500C8 .5 3 2 3 5c0 2 2 3 4.500 3C4 8 1.500 10 2 12.500 3 16 9 16 11 12.500" stroke="#999" strokeWidth="1.700" /><path d="M12 13h11l-2 2.500V23h-3v-8l-2 0v8h-3v-8z" fill="#bbb" /></g>,
    removeLayer: <g><path d="M3 2h17v17H3z" stroke="#85857c" strokeWidth="1.500" /><rect x="15" y="15" width="9" height="8.500" rx="1.500" fill="#ef4b4b" /><path d="M16.800 19.300h5.400" stroke="#fff" strokeWidth="1.700" /></g>,
    star: <path d="M12 1l2.700 8.200H23.500l-7 5.200 2.600 8.800-7.100-5.300-7.100 5.300 2.600-8.800-7-5.200h8.800z" fill="#fffb6b" stroke="#d4a900" strokeWidth="1.200" strokeLinejoin="round" />,
    folder: <Folder />,
    folderLink: <g><path d="M1.500 23V9.500h9l3 3.500h8.500v10z" fill="#f1f1f1" stroke="#85857c" strokeWidth="1.500" /><path d="M1 7.500V2h11l3 3.500h8V10h-9l-3-2.500z" fill="#85857c" /></g>,
    home: <g><Folder /><path d="M7 14l5-5.500 5 5.500h-1.800v5.500H8.800V14z" fill="#fff" stroke="#222" strokeWidth="1.400" /></g>,
    geopackage: <Box />,
    spatialite: <Feather />,
    postgis: (
        <g stroke={NAVY} strokeWidth="1" strokeLinejoin="round">
            <path d="M7 1.500C3 0 .8 2.500 1 6.500 1.300 11 3 17.500 5 18c1.500.2 2-2 3.500-3.500z" fill={BLUE} />
            <path d="M17 1.500c4-1.200 6.800 1 6 5-.8 4-3 8-5 10l-3-1z" fill={BLUE} />
            <path d="M7.500 4c1.500-3.500 9-3.500 10.500 0 1 3-.5 7-.5 11 2 1.500 4-1 6 .5-2 2.500-5 2-6 1.500-.5 3 0 6-3 6s-2.700-3-3-6.500c-1.500 1-4.500 1-5-1 2-1.500 2-2 1.500-5C7.500 8.500 6.500 6.500 7.500 4z" fill={BLUE} />
        </g>
    ),
    mssql: <path d="M1 1.500c9 0 20 2 22.500 10.500C14 14 6 16 1.500 22 4 16 5 8 1 1.500zM7 2.500c3 5 3 9 1 14M12 4c2 4 2.500 7 1 11M17 6c1.500 3 1.500 5 1 8" fill={BLUE} stroke={NAVY} strokeWidth="1.200" />,
    oracle: <rect x="1" y="4" width="22" height="16" rx="6" fill={BLUE} stroke={NAVY} strokeWidth="1.900" />,
    db2: <g><rect width="24" height="24" rx="3" fill={BLUE} /><text x="12" y="15" fontSize="9" textAnchor="middle" fill="#fff" fontFamily="DejaVu Sans, sans-serif">DB2</text></g>,
    arcMap: <g><circle cx="12" cy="12" r="11" fill="#a5c4e6" stroke={BLUE} /><path d="M4 5l5-2 2 4-3 3-4-1zM13 4l6 1 2 5-3 4-4-4z" fill="#2d5375" /><path d="M1 12h22M12 1v22" stroke="#dbe8f5" strokeWidth="0.800" /><circle cx="7" cy="17" r="5.500" fill="#fff" stroke="#333" strokeWidth="0.800" /><path d="M4 14l3-1v3l-2 2zM8 15l3 0 .5 3-2 3-2-3z" fill="#222" /></g>,
    arcFeature: <g><circle cx="12" cy="12" r="11" fill="#fff" stroke={BLUE} /><ellipse cx="12" cy="12" rx="5" ry="11" stroke={BLUE} /><path d="M1 12h22M3 6h18M3 18h18" stroke={BLUE} /><path d="M5 5l6 8 3-7h4" stroke="#222" /><circle cx="14" cy="5.500" r="1.300" fill="#fff" stroke="#222" /><circle cx="18.500" cy="5.500" r="1.300" fill="#fff" stroke="#222" /><circle cx="7" cy="17" r="5.500" fill="#fff" stroke="#333" strokeWidth="0.800" /><path d="M4 14l3-1v3l-2 2zM8 15l3 0 .5 3-2 3-2-3z" fill="#222" /></g>,
    geonode: (
        <g fill={BLUE} stroke={NAVY} strokeWidth="0.900">
            {[0, 60, 120, 180, 240, 300].map((a) => (
                <path key={a} transform={`rotate(${a} 12 12)`} d="M11.300 10.500L9.800 3c0-2.700 4.400-2.700 4.400 0l-1.500 7.500z" />
            ))}
            <circle cx="12" cy="12" r="2" />
        </g>
    ),
    maptiler: (
        <g>
            <path d="M7 3c3-3 7-3 10 0l-5 5z" fill="#fbc82e" /><path d="M17.300 3.300l4.500 7.500L17 14l-4.500-6z" fill="#f90" /><path d="M6.700 3.300L2.200 10.800 7 14l4.500-6z" fill="#ff4a2e" />
            <path d="M2 11.500L7 15l-2.500 4.500C2.500 18 1.800 14 2 11.500z" fill="#f1175d" /><path d="M22 11.500L17 15l2.500 4.500c2-2 2.800-5.500 2.500-8z" fill="#00cfe0" />
            <path d="M7.500 14.500L12 19v5l-7-4z" fill="#7a1cf0" /><path d="M16.500 14.500L12 19v5l7-4z" fill="#03a1c4" />
        </g>
    ),
    raster: (
        <g>
            <path d="M2 2h7v7H2zM16 2h7v7h-7zM9 9h7v7H9zM2 16h7v7H2z" fill="#2d3e55" />
            <path d="M9 2h7v7H9zM2 9h7v7H2zM16 9h7v7h-7zM9 16h7v7H9z" fill="#aec8e6" />
        </g>
    ),
};

/* ---------- toolbars ---------- */

// entry: [icon, label, flags]   flags: d = disabled, m = corner menu, a = active
const ROW1 = [
    [['newProject', 'New Project'], ['open', 'Open Project'], ['save', 'Save Project'], ['layout', 'New Print Layout'], ['layoutManager', 'Layout Manager'], ['style', 'Style Manager']],
    [['pan', 'Pan Map', 'a'], ['panSelection', 'Pan to Selection'], ['zoomIn', 'Zoom In'], ['zoomOut', 'Zoom Out'], ['zoomFull', 'Zoom Full'], ['zoomSelection', 'Zoom to Selection', 'd'], ['zoomLayer', 'Zoom to Layer'], ['zoomNative', 'Zoom to Native Resolution'], ['zoomLast', 'Zoom Last'], ['zoomNext', 'Zoom Next', 'd'], ['newMap', 'New Map View'], ['new3d', 'New 3D Map View'], ['newBookmark', 'New Bookmark'], ['bookmarks', 'Show Bookmarks'], ['clock', 'Temporal Controller'], ['refresh', 'Refresh']],
    [['identify', 'Identify Features'], ['table', 'Attribute Table', 'd'], ['abacus', 'Field Calculator', 'd'], ['gear', 'Toolbox'], ['sigma', 'Statistical Summary'], ['measure', 'Measure'], 'arrow', ['mapTip', 'Map Tips']],
];
const ROW2 = [
    [['dataSource', 'Data Source Manager'], ['newGpkg', 'New GeoPackage Layer'], ['newShp', 'New Shapefile Layer'], ['newSpatialite', 'New SpatiaLite Layer'], ['newMemory', 'New Scratch Layer'], 'sep', ['newVirtual', 'New Virtual Layer'], 'sep'],
    [['currentEdits', 'Current Edits', 'dm'], ['edit', 'Toggle Editing', 'd'], ['saveEdits', 'Save Layer Edits', 'd'], ['addPoint', 'Add Point Feature', 'd'], ['vertexTool', 'Vertex Tool', 'd'], 'arrow', ['modifyAttr', 'Modify Attributes', 'd'], ['trash', 'Delete Selected', 'd'], ['cut', 'Cut Features', 'd'], ['copy', 'Copy Features', 'd'], ['paste', 'Paste Features', 'd'], ['undo', 'Undo', 'd'], ['redo', 'Redo', 'd']],
    [['label', 'Layer Labeling', 'd'], ['diagram', 'Layer Diagram', 'd'], 'sep', ['pinLabel', 'Highlight Pinned Labels'], ['unplaced', 'Show Unplaced Labels'], 'sep', ['pinGrey', 'Pin Labels', 'd'], ['showLabel', 'Show Labels', 'd'], ['moveLabel', 'Move Label', 'd'], ['rotateLabel', 'Rotate Label', 'd'], ['editLabel', 'Change Label', 'd']],
    [['addGlobe', 'Add Web Layer', 'm'], ['searchGlobe', 'Search Web Layer'], ['binoculars', 'MetaSearch']],
    [['python', 'Python Console'], ['contour', 'Contour'], ['earth', 'Earth']],
    [['book', 'Help Contents']],
    [],
];
const ROW3_A = [
    ['digitCurve', 'Digitize with Curve', 'd'], ['triangle', 'Advanced Digitizing', 'd'], ['movePoint', 'Move Feature', 'd'], 'arrow', ['rotateFeature', 'Rotate Feature', 'd'], ['simplify', 'Simplify Feature', 'd'], ['addRing', 'Add Ring', 'd'], ['addPart', 'Add Part', 'd'], ['fillRing', 'Fill Ring', 'd'], ['deleteRing', 'Delete Ring', 'd'], ['deletePart', 'Delete Part', 'd'], ['reshape', 'Reshape Features', 'd'], ['offset', 'Offset Curve', 'd'], ['reverse', 'Reverse Line', 'd'], ['trimExtend', 'Trim/Extend', 'd'], ['splitFeatures', 'Split Features', 'd'], ['splitParts', 'Split Parts', 'd'], ['mergeFeatures', 'Merge Features', 'd'], ['mergeAttr', 'Merge Attributes', 'd'], ['rotateSymbols', 'Rotate Point Symbols', 'd'], 'arrow',
];
const ROW4_A = [
    [['select', 'Select Features', 'd'], 'arrow', ['selectForm', 'Select by Value', 'd'], 'arrow', ['deselect', 'Deselect Features'], 'arrow', ['selectLocation', 'Select by Location']],
    [['gears', 'Settings'], ['network', 'Network'], ['aToE', 'Rename Nodes'], ['rows', 'Fill Table'], ['pipe', 'Flow'], ['yinYang', 'Diameter'], ['play', 'Run'], 'sep', ['contourLabel', 'Contour Labels'], 'arrow'],
    [['profile', 'Profile Tool']],
    [['greenSearch', 'OSM Search'], ['osmEdit', 'OSM Edit']],
];

function Tri({ dir = 'down', light }) {
    const d = { down: 'M0 2h14L7 12z', up: 'M0 12h14L7 2z', right: 'M3 0v14l8-7z', left: 'M11 0v14L3 7z' }[dir];
    return <svg width="14" height="14" viewBox="0 0 14 14" className="shrink-0" aria-hidden="true"><path d={d} fill={light ? '#b0b0b0' : '#555'} /></svg>;
}

function Handle() {
    return (
        <span className="grid w-[21px] shrink-0 grid-cols-2 place-content-center gap-x-[4px] gap-y-[4px]">
            {Array.from({ length: 12 }, (_, i) => <i key={i} className="size-[2px] bg-[#b5b5b5]" />)}
        </span>
    );
}

function Tool({ item }) {
    if (item === 'sep') return <span className="mx-[5px] h-[38px] w-[4px] shrink-0 border-l-2 border-[#cfcfcf] bg-white" />;
    if (item === 'arrow') {
        return <button type="button" aria-label="More" className="flex w-[24px] shrink-0 justify-center"><Tri /></button>;
    }
    const [icon, label, flags = ''] = item;
    return (
        <button
            type="button"
            aria-label={label}
            disabled={flags.includes('d')}
            className={`relative flex h-[62px] w-[66px] shrink-0 items-center justify-center rounded-[6px] ${flags.includes('a') ? 'border-2 border-[#a6a6a6] bg-[#d6d6d6]' : ''}`}
        >
            <span className={flags.includes('d') ? 'opacity-35 grayscale-50' : ''}><Svg>{ICONS[icon]}</Svg></span>
            {flags.includes('m') && (
                <svg width="12" height="8" viewBox="0 0 12 8" className="absolute right-[6px] bottom-[6px]" aria-hidden="true"><path d="M0 0h12L6 8z" fill="#555" /></svg>
            )}
        </button>
    );
}

function Section({ items = [], grow, first, children }) {
    return (
        <div className={`flex items-center border-b-2 border-[#b0b0b0] bg-linear-to-b from-[#f6f6f6] to-[#ebebeb] pr-[6px] ${first ? '' : 'ml-px pl-[4px]'} ${grow ? 'flex-1' : 'shrink-0'}`}>
            <Handle />
            {items.map((item, i) => <Tool key={i} item={item} />)}
            {children}
        </div>
    );
}

function ToolRow({ sections }) {
    return (
        <div className="flex h-[78px] overflow-hidden">
            {sections.map((items, i) => <Section key={i} items={items} first={i === 0} grow={i === sections.length - 1} />)}
        </div>
    );
}

function Stepper() {
    return (
        <span className="flex w-[28px] shrink-0 flex-col items-center justify-center gap-[4px] border-l-2 border-[#c4c4c4]">
            <button type="button" aria-label="Increase"><Tri dir="up" /></button>
            <button type="button" aria-label="Decrease"><Tri /></button>
        </span>
    );
}

/* ---------- docks ---------- */

const TREE = [
    ['star', 'Favorites', 'open'],
    ['folderLink', '/Users/jin_igarashi/Documents/git/postgis2geojson', '', 1],
    ['folder', '/Users/jin_igarashi/Documents/git/WASAC/postg', 'closed', 1],
    ['bookmarks', 'Spatial Bookmarks', 'closed'],
    ['home', 'Home', 'closed'],
    ['folder', '/', 'closed'],
    ['folder', '/Volumes', 'closed'],
    ['geopackage', 'GeoPackage', ''],
    ['spatialite', 'SpatiaLite', 'closed'],
    ['postgis', 'PostGIS', 'closed'],
    ['mssql', 'MSSQL', ''],
    ['oracle', 'Oracle', ''],
    ['db2', 'DB2', ''],
    ['arcMap', 'ArcGIS Map Service', ''],
    ['arcFeature', 'ArcGIS Feature Service', ''],
    ['geonode', 'GeoNode', ''],
    ['maptiler', 'MapTiler', 'closed'],
];

function DockTitle({ children }) {
    return (
        <div className="flex h-[42px] shrink-0 items-center pr-[4px] pl-[4px]">
            <h2 className="flex-1 text-[22px] text-[#222]">{children}</h2>
            <button type="button" aria-label={`Float ${children}`} className="mr-[6px]">
                <svg width="22" height="22" viewBox="0 0 22 22" fill="none" stroke="#666" strokeWidth="2" aria-hidden="true">
                    <rect x="1" y="1" width="20" height="20" rx="4" /><path d="M5 9h7v8H5zM9 8V5h8v8h-4" strokeWidth="1.800" />
                </svg>
            </button>
            <button type="button" aria-label={`Close ${children}`}>
                <svg width="22" height="22" viewBox="0 0 22 22" fill="none" stroke="#666" strokeWidth="2" aria-hidden="true">
                    <rect x="1" y="1" width="20" height="20" rx="4" /><path d="M6 6l10 10M16 6L6 16" strokeWidth="4" />
                </svg>
            </button>
        </div>
    );
}

function DockTool({ icon, label, disabled, menu }) {
    return (
        <button type="button" aria-label={label} disabled={disabled} className="relative flex w-[50px] shrink-0 justify-center">
            <span className={disabled ? 'opacity-50' : ''}><Svg size={32}>{ICONS[icon]}</Svg></span>
            {menu && <svg width="12" height="8" viewBox="0 0 12 8" className="absolute right-[4px] -bottom-[4px]" aria-hidden="true"><path d="M0 0h12L6 8z" fill="#555" /></svg>}
        </button>
    );
}

function Browser() {
    return (
        <section className="flex min-h-0 flex-[732] flex-col">
            <DockTitle>Browser</DockTitle>
            <div className="mb-[4px] flex h-[56px] shrink-0 items-center pl-[3px]">
                <DockTool icon="addLayer" label="Add Selected Layers" />
                <DockTool icon="refresh" label="Refresh Browser" />
                <DockTool icon="filter" label="Filter Browser" />
                <DockTool icon="collapse" label="Collapse All" />
                <DockTool icon="info" label="Enable Properties Widget" />
            </div>
            <div className="flex min-h-0 flex-1 flex-col border-2 border-l-0 border-[#b9b9b9] bg-white">
                <div className="flex min-h-0 flex-1">
                    <ul className="min-w-0 flex-1 overflow-hidden">
                        {TREE.map(([icon, text, state, level]) => (
                            <li key={text} className={`flex h-[36px] items-center whitespace-nowrap text-[25px] ${level ? 'pl-[40px]' : ''}`}>
                                <span className="flex w-[36px] shrink-0 justify-center">
                                    {state && <button type="button" aria-label={`Toggle ${text}`}><Tri dir={state === 'open' ? 'down' : 'right'} /></button>}
                                </span>
                                <span className="mr-[12px] ml-[8px] shrink-0"><Svg size={32}>{ICONS[icon]}</Svg></span>
                                {text}
                            </li>
                        ))}
                    </ul>
                    <div className="flex w-[28px] shrink-0 flex-col border-l border-[#b9b9b9] bg-[#e2e2e2]">
                        <button type="button" aria-label="Scroll up" className="flex h-[26px] items-center justify-center border-b-2 border-[#b9b9b9] bg-[#f8f8f8]"><Tri dir="up" /></button>
                        <div className="h-1/4 border-b-2 border-[#b9b9b9] bg-linear-to-r from-white to-[#f0f0f0]" />
                        <div className="flex-1" />
                        <button type="button" aria-label="Scroll down" className="flex h-[29px] items-center justify-center border-t-2 border-[#b9b9b9] bg-[#f8f8f8]"><Tri /></button>
                    </div>
                </div>
                <div className="flex h-[27px] shrink-0 border-t border-[#b9b9b9] bg-[#e2e2e2]">
                    <button type="button" aria-label="Scroll left" className="flex w-[25px] items-center justify-center border-r-2 border-[#b9b9b9] bg-[#f8f8f8]"><Tri dir="left" /></button>
                    <div className="w-[567px] border-r-2 border-[#b9b9b9] bg-linear-to-b from-white to-[#f0f0f0]" />
                    <div className="flex-1" />
                    <button type="button" aria-label="Scroll right" className="flex w-[28px] items-center justify-center border-l-2 border-[#b9b9b9] bg-[#f8f8f8]"><Tri dir="right" /></button>
                    <span className="w-[28px] border-l border-[#b9b9b9] bg-[#ececec]" />
                </div>
            </div>
        </section>
    );
}

function Check({ label, ...rest }) {
    return (
        <span className="relative flex size-[28px] shrink-0">
            <input type="checkbox" aria-label={label} className="peer size-[28px] appearance-none border-2 border-[#b5b5b5] bg-white" {...rest} />
            <svg viewBox="0 0 28 28" className="pointer-events-none absolute inset-0 hidden peer-checked:block" fill="none" aria-hidden="true">
                <path d="M7 14l5 8L20 6" stroke="#111" strokeWidth="3" />
            </svg>
        </span>
    );
}

function Layers() {
    const [visible, setVisible] = useState({ rgb: true, dem: false });
    const toggle = (key) => setVisible((v) => ({ ...v, [key]: !v[key] }));

    return (
        <section className="flex min-h-0 flex-[572] flex-col">
            <DockTitle>Layers</DockTitle>
            <div className="mb-[4px] flex h-[56px] shrink-0 items-center pl-[3px]">
                <DockTool icon="brush" label="Layer Styling" />
                <DockTool icon="addGroup" label="Add Group" />
                <DockTool icon="eye" label="Manage Map Themes" menu />
                <DockTool icon="filter" label="Filter Legend" />
                <DockTool icon="epsilon" label="Filter by Expression" disabled />
                <button type="button" aria-label="More" className="flex w-[24px] justify-center"><Tri /></button>
                <DockTool icon="expand" label="Expand All" />
                <DockTool icon="collapse" label="Collapse All" />
                <DockTool icon="removeLayer" label="Remove Layer" />
            </div>
            <ul className="min-h-0 flex-1 overflow-hidden border-2 border-l-0 border-[#b9b9b9] bg-white text-[25px]">
                <li className="flex h-[36px] items-center pl-[44px]">
                    <Check label="rwanda_dem_EPSG3857_10m_RGB" checked={visible.rgb} onChange={() => toggle('rgb')} />
                    <span className="ml-[14px]"><Svg size={28}>{ICONS.raster}</Svg></span>
                    <span className="ml-[9px] flex h-[36px] flex-1 items-center rounded-[3px] border-2 border-[#b3d0f5] bg-linear-to-b from-[#f6faff] to-[#e8f0fd] pl-[3px] text-[26px] font-bold text-[#2b3440] underline decoration-2 underline-offset-4">
                        rwanda_dem_EPSG3857_10m_RGB
                    </span>
                </li>
                <li className="flex h-[36px] items-center">
                    <button type="button" aria-label="Toggle rwanda_dem_EPSG3857_10m" className="flex w-[36px] justify-center"><Tri /></button>
                    <span className="ml-[8px]"><Check label="rwanda_dem_EPSG3857_10m" checked={visible.dem} onChange={() => toggle('dem')} /></span>
                    <span className="ml-[14px]"><Svg size={28}>{ICONS.raster}</Svg></span>
                    <span className="pl-[14px] text-[26px] font-bold text-[#808080] italic">rwanda_dem_EPSG3857_10m</span>
                </li>
                <li className="flex h-[36px] items-center pl-[84px]"><i className="mr-[12px] size-[32px] bg-black" />0</li>
                <li className="flex h-[36px] items-center pl-[128px]">4124</li>
            </ul>
        </section>
    );
}

/* ---------- map ---------- */

const LAND = [1085, 38, 1160, 34, 1160, 27, 1212, 24, 1212, 40, 1199, 42, 1199, 75, 1214, 90, 1214, 120, 1244, 132, 1244, 170, 1259, 172, 1259, 205, 1267, 206, 1267, 290, 1322, 290, 1322, 310, 1368, 320, 1400, 340, 1414, 352, 1414, 424, 1430, 426, 1430, 448, 1462, 474, 1477, 495, 1492, 522, 1492, 815, 1522, 860, 1530, 875, 1530, 925, 1522, 960, 1508, 962, 1508, 1103, 1492, 1105, 1492, 1133, 1445, 1150, 1445, 1165, 1410, 1165, 1390, 1140, 1350, 1183, 1310, 1178, 1272, 1195, 1210, 1178, 1208, 1155, 1180, 1145, 1178, 1118, 1136, 1102, 1136, 1132, 1086, 1132, 1085, 1112, 1070, 1112, 1068, 1145, 1005, 1145, 988, 1160, 984, 1195, 932, 1203, 890, 1190, 868, 1165, 850, 1140, 830, 1124, 810, 1127, 810, 1252, 798, 1254, 798, 1272, 783, 1273, 783, 1432, 768, 1434, 768, 1452, 700, 1495, 660, 1482, 658, 1510, 600, 1525, 575, 1515, 560, 1504, 500, 1525, 460, 1537, 437, 1518, 400, 1514, 365, 1522, 345, 1535, 312, 1532, 311, 1480, 301, 1478, 301, 1388, 240, 1362, 215, 1362, 170, 1348, 120, 1345, 100, 1347, 100, 1442, 80, 1462, 63, 1462, 63, 1312, 55, 1312, 55, 1332, 15, 1328, 15, 1125, 45, 1112, 45, 1073, 85, 1078, 100, 1082, 100, 1103, 138, 1075, 173, 1038, 173, 992, 201, 970, 201, 954, 233, 952, 233, 906, 278, 887, 278, 787, 248, 770, 233, 768, 233, 743, 248, 742, 248, 727, 263, 725, 263, 692, 248, 690, 248, 338, 512, 338, 512, 268, 635, 268, 635, 243, 758, 243, 758, 368, 768, 383, 805, 353, 853, 335, 868, 305, 915, 297, 945, 278, 946, 214, 991, 212, 1006, 175, 1040, 150, 1055, 112, 1085, 95];

const RIVER = 'rgb(0,185,20)';
const LAKE = 'rgb(0,184,240)';

// [color, alpha, line width (0 = filled), path]
const ZONES = [
    ['rgb(0,195,185)', 0.5, 14, 'M252 560L252 690L265 740L290 800L285 880L240 950L180 1000L110 1100L15 1135'],
    ['rgb(0,195,185)', 0.7, 0, 'M278 780L300 810L330 860L300 900L260 890z'],
    ['rgb(0,225,225)', 1, 0, 'M248 342L350 346L500 366L400 370L480 380L400 382L500 392L248 396z'],
    [LAKE, 0.9, 0, 'M1322 315L1368 320L1414 352L1414 424L1400 440L1370 400L1345 370z'],
    [LAKE, 0.85, 0, 'M1405 430L1440 450L1480 500L1475 530L1450 550L1430 600L1408 600L1415 530L1385 500z'],
    ['rgb(0,184,220)', 0.35, 0, 'M1267 290L1322 290L1414 360L1414 520L1400 640L1370 560L1350 440z'],
    [LAKE, 1, 0, 'M1425 668L1470 678L1462 718L1425 750L1392 805L1398 745L1420 720z'],
    [LAKE, 0.9, 0, 'M1435 610L1465 600L1465 640L1440 645z'],
    [RIVER, 0.8, 12, 'M1475 540L1478 600L1470 655L1440 665'],
    [RIVER, 1, 0, 'M1492 710L1492 815L1522 860L1528 910L1505 960L1495 880L1475 850L1430 882L1405 880L1392 895L1395 918L1375 900L1378 870L1440 850L1450 800L1478 765L1480 720z'],
    [RIVER, 0.9, 11, 'M1515 900L1500 950L1488 1020L1490 1070L1500 1110L1480 1130'],
    [LAKE, 1, 0, 'M1405 890L1428 882L1425 908L1400 912z'],
    [LAKE, 1, 0, 'M1455 855L1472 855L1458 890L1445 892z'],
    [RIVER, 0.85, 7, 'M1265 380L1265 465L1290 520L1300 555L1320 565'],
    ['rgb(0,184,225)', 0.8, 6, 'M1264 305L1253 345L1255 385'],
    [RIVER, 0.7, 6, 'M1060 680L1080 715L1110 725L1150 708L1195 698'],
    [RIVER, 0.4, 5, 'M960 660L1030 710'],
    [RIVER, 0.95, 14, 'M865 887L920 880L945 855L962 848'],
    ['rgb(0,188,60)', 0.85, 13, 'M838 890L835 940L815 990L805 1060L795 1130L800 1215'],
    ['rgb(0,188,60)', 0.4, 6, 'M905 885L950 950M860 1022L940 1035'],
    [LAKE, 0.95, 12, 'M955 858L980 886L1003 886'],
    ['rgb(0,190,190)', 0.55, 12, 'M1015 880L1040 960'],
    ['rgb(0,190,130)', 0.5, 0, 'M1020 970L1095 990L1120 1060L1150 1090L1130 1130L1040 1140L1045 1040z'],
    ['rgb(0,188,100)', 0.8, 10, 'M1185 1015L1168 1090'],
    ['rgb(0,188,100)', 0.7, 16, 'M1185 1130L1215 1165L1270 1180L1350 1165L1395 1120'],
    ['rgb(0,188,100)', 0.6, 14, 'M825 1118L870 1150L895 1180L935 1195L985 1185'],
    ['rgb(0,195,110)', 0.7, 8, 'M1097 70L1093 180L1065 250L1050 310'],
    [RIVER, 0.8, 12, 'M1090 40L1090 85M1150 40L1205 32'],
    ['rgb(0,215,245)', 0.9, 14, 'M730 365L752 410L765 478'],
    ['rgb(0,215,20)', 0.9, 18, 'M788 460L806 484'],
    ['rgb(0,210,60)', 0.7, 30, 'M652 320L655 395'],
    ['rgb(0,205,30)', 0.9, 22, 'M618 398L642 448'],
    ['rgb(0,190,190)', 0.5, 14, 'M778 1280L775 1430'],
    [LAKE, 0.9, 14, 'M715 1480L755 1455'],
    [RIVER, 0.9, 16, 'M690 1488L712 1480'],
    ['rgb(0,8,170)', 1, 0, 'M512 268L566 268L545 283L560 297L572 300L580 298L590 308L588 322L575 326L548 314L535 343L512 343z'],
    ['rgb(0,8,170)', 1, 0, 'M642 268L657 268L655 273L642 271z'],
];

// turns every slanted edge of the outline into tile-sized steps
function steppedOutline(pts) {
    let d = `M${pts[0]} ${pts[1]}`;
    for (let i = 0; i < pts.length; i += 2) {
        const [x0, y0] = [pts[i], pts[i + 1]];
        const x1 = pts[(i + 2) % pts.length];
        const y1 = pts[(i + 3) % pts.length];
        const n = Math.max(1, Math.round(Math.abs(x1 - x0) / 13));
        for (let k = 1; k <= n; k++) {
            const x = x0 + ((x1 - x0) * k) / n;
            const y = y0 + ((y1 - y0) * k) / n;
            d += `H${x.toFixed(1)}V${y.toFixed(1)}`;
        }
    }
    return d + 'z';
}

const W = 453;
const H = 420;

function drawDem(canvas) {
    const ctx = canvas.getContext('2d');
    const layer = () => {
        const c = document.createElement('canvas');
        c.width = W;
        c.height = H;
        const g = c.getContext('2d');
        g.scale(W / 1515, H / 1514);
        g.translate(-15, -24);
        return g;
    };

    const mask = layer();
    mask.fill(new Path2D(steppedOutline(LAND)));
    mask.fill(new Path2D('M153 762H176V785H172V788H158V776H153z'));
    const land = mask.getImageData(0, 0, W, H).data;

    const zone = layer();
    ZONES.forEach(([color, alpha, width, d]) => {
        zone.globalAlpha = alpha;
        zone.lineWidth = width;
        zone.fillStyle = color;
        zone.strokeStyle = color;
        if (width) zone.stroke(new Path2D(d));
        else zone.fill(new Path2D(d));
    });
    const zones = zone.getImageData(0, 0, W, H).data;

    let seed = 20201;
    const rand = () => {
        seed = (seed * 1664525 + 1013904223) >>> 0;
        return seed / 4294967296;
    };

    // green holds the height, blue wraps round quickly and reads as noise
    const img = ctx.createImageData(W, H);
    for (let py = 0; py < H; py++) {
        for (let px = 0; px < W; px++) {
            const i = (py * W + px) * 4;
            img.data[i + 3] = 255;
            if (land[i + 3] < 128) {
                img.data[i] = 0;
                img.data[i + 1] = 135;
                img.data[i + 2] = 161;
                continue;
            }
            if (zones[i + 3] > 200 && zones[i + 1] < 20) {
                // water with no data, dark diagonal bands
                img.data[i + 2] = (px + py * 2) % 7 < 3 ? 30 : 150 + rand() * 60;
                continue;
            }
            const x = 15 + (px * 1515) / W;
            const y = 24 + (py * 1514) / H;
            const ridge = 330 + 85 * Math.cos((y - 640) / 190);
            const wave = Math.sin(x / 31 + Math.sin(y / 43) * 2) * Math.sin(y / 27 + x / 90);
            let g = 192 + (30 + 8 * wave) * Math.exp(-(((x - ridge) / 115) ** 2));
            g += 18 * Math.exp(-(((x - 560) / 260) ** 2));
            g += 14 * Math.exp(-(((x - 850) / 120) ** 2) - ((y - 420) / 110) ** 2);
            g += 6 * wave;
            g += (rand() - 0.5) * 24;
            let b = 10 + rand() * 225;
            if (x < 500 && y > 395 && y < 480) b = py % 2 ? 40 + rand() * 120 : 120 + rand() * 110;

            const jx = Math.min(W - 1, Math.max(0, Math.round(px + (rand() - 0.5) * 3)));
            const jy = Math.min(H - 1, Math.max(0, Math.round(py + (rand() - 0.5) * 3)));
            const z = (jy * W + jx) * 4;
            if (zones[z + 3] > 20 && zones[z + 1] > 20 && rand() * 255 < zones[z + 3]) {
                g = zones[z + 1];
                b = zones[z + 2];
            }
            img.data[i] = 1;
            img.data[i + 1] = g;
            img.data[i + 2] = b;
        }
    }
    ctx.putImageData(img, 0, 0);
}

function MapView() {
    const ref = useRef(null);
    useEffect(() => drawDem(ref.current), []);
    return (
        <main className="mt-[2px] flex min-w-0 flex-1 items-center justify-center border-2 border-r-0 border-[#b9b9b9] bg-white">
            <canvas ref={ref} width={W} height={H} className="w-[66.2%] [image-rendering:pixelated]" />
        </main>
    );
}

/* ---------- status bar ---------- */

const FIELD = 'flex shrink-0 rounded-[5px] border-2 border-t-[3px] border-[#a9a9a9] bg-white';

function StatusBar() {
    return (
        <footer className="flex h-[60px] shrink-0 items-center overflow-hidden pt-[4px] text-[22px] whitespace-nowrap">
            <label className={`${FIELD} ml-[4px] h-[47px] w-[423px] items-center pl-[14px]`}>
                <svg width="28" height="28" viewBox="0 0 28 28" fill="none" stroke="#8a8a8a" strokeWidth="2" aria-hidden="true"><circle cx="11" cy="11" r="8" /><path d="M17 17l8 8" strokeWidth="3" /></svg>
                <input aria-label="Locate" placeholder="Type to locate (⌘K)" className="ml-[14px] min-w-0 flex-1 text-[25px] outline-none placeholder:text-[#808080]" />
            </label>
            <span className="ml-[17px] w-[362px]">1 legend entries removed.</span>
            <label htmlFor="coord" className="w-[123px]">Coordinate</label>
            <input id="coord" defaultValue="3175031,-213596" className={`${FIELD} h-[43px] w-[224px] text-center`} />
            <button type="button" aria-label="Toggle extents" className="ml-[8px]">
                <svg width="32" height="32" viewBox="0 0 24 24" fill="none" stroke="#000" strokeWidth="1.600" aria-hidden="true">
                    <path d="M5 3c2-2 5-1 6 1l4 7-5 4-5-5z" fill="#fff" /><path d="M8 4l3 6M2 15l4-4" strokeWidth="2.200" /><ellipse cx="14" cy="17" rx="6" ry="6" fill="#fff" /><circle cx="15" cy="16.500" r="2" /><path d="M8 13l4 7M10 12l8 1" strokeWidth="2" /><path d="M17 7l4-5M19 9l3-2" strokeDasharray="2 2" />
                </svg>
            </button>
            <label htmlFor="scale" className="ml-[27px] w-[64px]">Scale</label>
            <span className={`${FIELD} h-[47px] w-[195px]`}>
                <input id="scale" defaultValue="1:2,032,859" className="min-w-0 flex-1 pl-[4px] outline-none" />
                <button type="button" aria-label="Scale list" className="flex w-[40px] items-center justify-center border-l-2 border-[#c4c4c4] bg-[#f8f8f8]"><Tri /></button>
            </span>
            <button type="button" aria-label="Lock scale" className="ml-[25px]">
                <svg width="24" height="30" viewBox="0 0 24 30" fill="none" aria-hidden="true"><path d="M5 15V8a7 7 0 0 1 14 0v7" stroke="#8a8a8a" strokeWidth="3" /><rect y="14" width="24" height="16" rx="2" fill="#666" /></svg>
            </button>
            <label htmlFor="magnifier" className="ml-[18px] w-[105px]">Magnifier</label>
            <span className={`${FIELD} h-[45px] w-[177px]`}>
                <input id="magnifier" defaultValue="100%" className="min-w-0 flex-1 pl-[7px] outline-none" />
                <Stepper />
            </span>
            <label htmlFor="rotation" className="ml-[19px] w-[106px]">Rotation</label>
            <span className={`${FIELD} h-[45px] w-[181px]`}>
                <input id="rotation" defaultValue="0.0 °" className="min-w-0 flex-1 pl-[8px] outline-none" />
                <Stepper />
            </span>
            <label className="ml-[13px] flex w-[144px] shrink-0 items-center gap-[10px] text-[#333]">
                <Check label="Render" defaultChecked />
                Render
            </label>
            <button type="button" className="flex shrink-0 items-center gap-[5px] text-[#333]">
                <svg width="30" height="30" viewBox="0 0 24 24" fill="none" stroke="#777" strokeWidth="1.600" aria-hidden="true"><circle cx="12" cy="12" r="10.500" /><ellipse cx="12" cy="12" rx="5" ry="10.500" /><path d="M2 8h20M12 1v22M3 17h18" /><path d="M1 12h22" stroke="#555" strokeWidth="3" /></svg>
                EPSG:3857
            </button>
            <button type="button" aria-label="Messages" className="mr-[36px] ml-auto">
                <svg width="32" height="30" viewBox="0 0 32 30" aria-hidden="true"><path d="M16 1c9 0 15 5 15 12 0 5-2 8-6 10 0 3 2 4 4 6-5 0-9-2-10-4C8 26 1 20 1 13S7 1 16 1z" fill="#666" /><circle cx="9" cy="13" r="2" fill="#fff" /><circle cx="16" cy="13" r="2" fill="#fff" /><circle cx="23" cy="13" r="2" fill="#fff" /></svg>
            </button>
            <svg width="20" height="20" viewBox="0 0 20 20" className="shrink-0 self-end" aria-hidden="true"><path d="M18 2v18M14 6v14M10 10v10M6 14v6M2 18v2" stroke="#aaa" strokeWidth="2" strokeDasharray="2 2" /></svg>
        </footer>
    );
}

function Notification() {
    return (
        <aside className="absolute top-[32px] right-0 flex h-[126px] w-[550px] items-center rounded-l-[12px] border border-r-0 border-[#b5b5b5] bg-[#ebeced] shadow-[0_4px_24px_rgba(0,0,0,0.3)]">
            <svg width="60" height="64" viewBox="0 0 60 64" className="ml-[21px] shrink-0" aria-hidden="true">
                <path d="M26 1q4-2 8 0l22 13q4 2 4 6v24q0 4-4 6L34 63q-4 2-8 0L4 50q-4-2-4-6V20q0-4 4-6z" fill="#4aa58f" />
                <path d="M16 16h28v32H16z" fill="#777" /><path d="M16 16h28v3H16z" fill="#4a4a4a" /><path d="M18 20h24v17H18z" fill="#a8a8ac" />
                <path d="M16 38h28v8H16z" fill="#cfcfcf" /><path d="M18 40h24v4H18z" fill="#4a4a4a" /><path d="M16 46h28v2H16z" fill="#fff" /><ellipse cx="30" cy="28" rx="3.500" ry="4.500" fill="none" stroke="#fff" strokeWidth="1.500" />
            </svg>
            <div className="ml-[20px] flex-1 text-[#333]">
                <p className="text-[24px] leading-[32px] font-medium">Boot OS X</p>
                <p className="font-['Noto_Sans_CJK_JP',sans-serif] text-[20px] leading-[36px]">ディスクをスキャンしますか？</p>
            </div>
            <span className="mr-[2px] h-full w-px bg-[#c8c8c8]" />
        </aside>
    );
}

export default function App() {
    return (
        <div className="relative flex h-screen flex-col overflow-hidden bg-[#ececec] font-['Inter','Noto_Sans_CJK_JP',sans-serif] text-black">
            {/* title bar */}
            <header className="relative flex h-[38px] shrink-0 items-center justify-center border-b-2 border-[#a8a8a8] bg-linear-to-b from-[#e2e2e2] to-[#cdcdcd]">
                <div className="absolute left-[12px] flex gap-[16px]">
                    <button type="button" aria-label="Close" className="size-[24px] rounded-full border border-[#d9544b] bg-[#ee6a5f]" />
                    <button type="button" aria-label="Minimize" className="size-[24px] rounded-full border border-[#dba13b] bg-[#f5bf4f]" />
                    <button type="button" aria-label="Zoom" className="size-[24px] rounded-full border border-[#4dae3f] bg-[#61c554]" />
                </div>
                <h1 className="text-[26px] leading-[32px] text-[#444]">*Untitled Project — QGIS</h1>
            </header>

            {/* toolbars */}
            <nav className="shrink-0" aria-label="Toolbars">
                <ToolRow sections={ROW1} />
                <ToolRow sections={ROW2} />
                <div className="flex h-[78px] overflow-hidden">
                    <Section first items={ROW3_A} />
                    <Section items={[['magnet', 'Enable Snapping'], ['snapVertex', 'Snapping Layers', 'dm'], ['snapPoints', 'Snap on Vertex', 'am']]}>
                        <span className="flex h-[43px] w-[196px] shrink-0 rounded-[4px] border-2 border-t-[3px] border-[#a9a9a9] bg-white">
                            <input aria-label="Snapping tolerance" defaultValue="12" disabled className="min-w-0 flex-1 pl-[6px] text-[25px] text-[#b5b5b5]" />
                            <Stepper />
                        </span>
                        <span className="relative ml-[3px] flex h-[48px] w-[198px] shrink-0 items-center">
                            <select aria-label="Snapping unit" className="size-full appearance-none rounded-[4px] border-2 border-[#c0c0c0] bg-linear-to-b from-white to-[#ececec] pl-[8px] text-[25px] text-[#808080]">
                                <option>px</option>
                            </select>
                            <span className="pointer-events-none absolute right-[14px]"><Tri light /></span>
                        </span>
                        {[['topology', 'Topological Editing'], ['avoidOverlap', 'Avoid Overlap', 'm'], ['intersect', 'Snapping on Intersection'], ['tracing', 'Tracing'], 'arrow', ['snapPencil', 'Self-snapping']].map((item, i) => <Tool key={i} item={item} />)}
                    </Section>
                    <Section grow items={[['qTulip', 'QTulip']]} />
                </div>
                <div className="flex h-[76px] overflow-hidden">
                    {ROW4_A.map((items, i) => <Section key={i} items={items} first={i === 0} />)}
                    <Section>
                        <input aria-label="MapTiler Geocoding" placeholder="MapTiler Geocodi..." className="h-[48px] w-[250px] rounded-[5px] border-2 border-t-[3px] border-[#a9a9a9] bg-white pl-[5px] text-[25px] outline-none placeholder:text-[#777]" />
                    </Section>
                    <Section><span className="w-[3px]" /></Section>
                    <Section grow items={[['importBox', 'Import'], ['exportBox', 'Export'], ['toolbox', 'Tools']]} />
                </div>
            </nav>

            <div className="flex min-h-0 flex-1">
                <div className="flex w-[738px] shrink-0 flex-col">
                    <Browser />
                    <div className="flex h-[12px] shrink-0 items-center justify-center gap-[4px]">
                        {[0, 1, 2, 3, 4, 5].map((i) => <i key={i} className="size-[2px] bg-[#b5b5b5]" />)}
                    </div>
                    <Layers />
                </div>
                <div className="flex w-[12px] shrink-0 flex-col items-center justify-center gap-[4px]">
                    {[0, 1, 2, 3, 4, 5].map((i) => <i key={i} className="size-[2px] bg-[#b5b5b5]" />)}
                </div>
                <MapView />
            </div>

            <StatusBar />
            <Notification />
        </div>
    );
}
